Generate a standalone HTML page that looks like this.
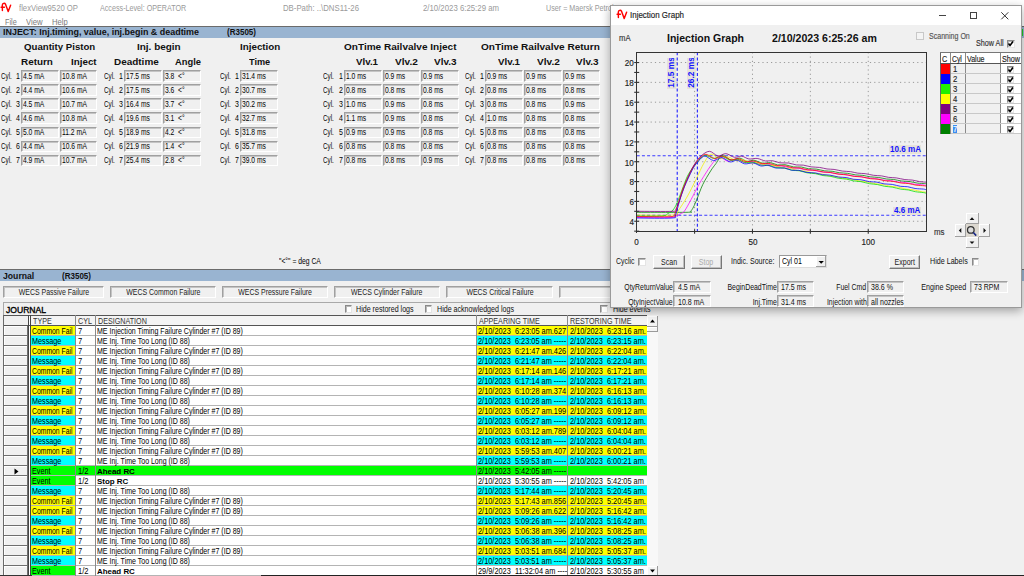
<!DOCTYPE html>
<html><head><meta charset="utf-8"><style>
html,body{margin:0;padding:0;}
body{width:1024px;height:576px;overflow:hidden;position:relative;background:#f0f0f0;font-family:"Liberation Sans", sans-serif;}
.n{-webkit-text-stroke:0.15px currentColor;}
</style></head><body>
<div style="position:absolute;left:0.00px;top:0.00px;width:1024.00px;height:26.00px;background:#fff;"></div>
<svg style="position:absolute;left:-3.6px;top:-1.2px" width="20" height="16"><path d="M6.4 11.6 L6.3 6.2 C6.4 4.3 8.6 3.6 9.6 5.4 L12.2 12.6 L14.6 6.3 M5.1 8.3 H8.4" stroke="#f00" stroke-width="1.45" fill="none" stroke-linecap="round" stroke-linejoin="round"/></svg>
<div style="position:absolute;left:19.00px;top:3.55px;font-size:8.8px;line-height:8.8px;color:#9a9a9a;white-space:pre;transform:scaleX(0.8764);transform-origin:0 0;">flexView9520 OP</div>
<div style="position:absolute;left:99.50px;top:3.55px;font-size:8.8px;line-height:8.8px;color:#9a9a9a;white-space:pre;transform:scaleX(0.8156);transform-origin:0 0;">Access-Level: OPERATOR</div>
<div style="position:absolute;left:282.50px;top:3.55px;font-size:8.8px;line-height:8.8px;color:#9a9a9a;white-space:pre;transform:scaleX(0.8849);transform-origin:0 0;">DB-Path: ..\DNS11-26</div>
<div style="position:absolute;left:422.80px;top:3.55px;font-size:8.8px;line-height:8.8px;color:#9a9a9a;white-space:pre;transform:scaleX(0.8879);transform-origin:0 0;">2/10/2023 6:25:29 am</div>
<div style="position:absolute;left:546.00px;top:3.55px;font-size:8.8px;line-height:8.8px;color:#9a9a9a;white-space:pre;transform:scaleX(0.8150);transform-origin:0 0;">User = Maersk Petroleum</div>
<div style="position:absolute;left:4.90px;top:17.95px;font-size:8.8px;line-height:8.8px;color:#7a7a7a;white-space:pre;transform:scaleX(0.8254);transform-origin:0 0;">File</div>
<div style="position:absolute;left:26.00px;top:17.95px;font-size:8.8px;line-height:8.8px;color:#7a7a7a;white-space:pre;transform:scaleX(0.8779);transform-origin:0 0;">View</div>
<div style="position:absolute;left:52.30px;top:17.95px;font-size:8.8px;line-height:8.8px;color:#7a7a7a;white-space:pre;transform:scaleX(0.8678);transform-origin:0 0;">Help</div>
<div style="position:absolute;left:0.00px;top:26.00px;width:1024.00px;height:1.00px;background:#6b6b6b;"></div>
<div style="position:absolute;left:0.00px;top:27.00px;width:1024.00px;height:11.00px;background:#99b4d1;"></div>
<div style="position:absolute;left:3.00px;top:28.38px;font-size:9px;line-height:9px;font-weight:bold;color:#111;white-space:pre;transform:scaleX(0.9923);transform-origin:0 0;">INJECT: Inj.timing, value, inj.begin &amp; deadtime</div>
<div style="position:absolute;left:227.00px;top:28.38px;font-size:9px;line-height:9px;font-weight:bold;color:#111;white-space:pre;transform:scaleX(0.8919);transform-origin:0 0;">(R3505)</div>
<div style="position:absolute;left:23.75px;top:41.79px;font-size:9.7px;line-height:9.7px;font-weight:bold;color:#111;white-space:pre;transform:scaleX(0.9954);transform-origin:0 0;">Quantity Piston</div>
<div style="position:absolute;left:136.60px;top:41.79px;font-size:9.7px;line-height:9.7px;font-weight:bold;color:#111;white-space:pre;transform:scaleX(1.0279);transform-origin:0 0;">Inj. begin</div>
<div style="position:absolute;left:240.00px;top:41.79px;font-size:9.7px;line-height:9.7px;font-weight:bold;color:#111;white-space:pre;transform:scaleX(1.0118);transform-origin:0 0;">Injection</div>
<div style="position:absolute;left:343.75px;top:41.79px;font-size:9.7px;line-height:9.7px;font-weight:bold;color:#111;white-space:pre;transform:scaleX(1.0361);transform-origin:0 0;">OnTime Railvalve Inject</div>
<div style="position:absolute;left:480.60px;top:41.79px;font-size:9.7px;line-height:9.7px;font-weight:bold;color:#111;white-space:pre;transform:scaleX(1.0376);transform-origin:0 0;">OnTime Railvalve Return</div>
<div style="position:absolute;left:21.25px;top:56.99px;font-size:9.7px;line-height:9.7px;font-weight:bold;color:#111;white-space:pre;transform:scaleX(1.0220);transform-origin:0 0;">Return</div>
<div style="position:absolute;left:70.60px;top:56.99px;font-size:9.7px;line-height:9.7px;font-weight:bold;color:#111;white-space:pre;transform:scaleX(1.0118);transform-origin:0 0;">Inject</div>
<div style="position:absolute;left:114.00px;top:56.99px;font-size:9.7px;line-height:9.7px;font-weight:bold;color:#111;white-space:pre;transform:scaleX(1.0262);transform-origin:0 0;">Deadtime</div>
<div style="position:absolute;left:175.00px;top:56.99px;font-size:9.7px;line-height:9.7px;font-weight:bold;color:#111;white-space:pre;transform:scaleX(0.9662);transform-origin:0 0;">Angle</div>
<div style="position:absolute;left:249.40px;top:56.99px;font-size:9.7px;line-height:9.7px;font-weight:bold;color:#111;white-space:pre;transform:scaleX(0.9449);transform-origin:0 0;">Time</div>
<div style="position:absolute;left:356.00px;top:56.99px;font-size:9.7px;line-height:9.7px;font-weight:bold;color:#111;white-space:pre;transform:scaleX(1.0046);transform-origin:0 0;">Vlv.1</div>
<div style="position:absolute;left:498.40px;top:56.99px;font-size:9.7px;line-height:9.7px;font-weight:bold;color:#111;white-space:pre;transform:scaleX(1.0046);transform-origin:0 0;">Vlv.1</div>
<div style="position:absolute;left:394.70px;top:56.99px;font-size:9.7px;line-height:9.7px;font-weight:bold;color:#111;white-space:pre;transform:scaleX(1.0411);transform-origin:0 0;">Vlv.2</div>
<div style="position:absolute;left:536.90px;top:56.99px;font-size:9.7px;line-height:9.7px;font-weight:bold;color:#111;white-space:pre;transform:scaleX(1.0411);transform-origin:0 0;">Vlv.2</div>
<div style="position:absolute;left:433.75px;top:56.99px;font-size:9.7px;line-height:9.7px;font-weight:bold;color:#111;white-space:pre;transform:scaleX(1.0274);transform-origin:0 0;">Vlv.3</div>
<div style="position:absolute;left:575.60px;top:56.99px;font-size:9.7px;line-height:9.7px;font-weight:bold;color:#111;white-space:pre;transform:scaleX(1.0274);transform-origin:0 0;">Vlv.3</div>
<div style="position:absolute;left:0.90px;top:71.75px;font-size:8.8px;line-height:8.8px;color:#000;white-space:pre;transform:scaleX(0.7100);transform-origin:0 0;">Cyl.</div>
<div style="position:absolute;left:15.06px;top:71.75px;font-size:8.8px;line-height:8.8px;color:#000;white-space:pre;transform:scaleX(0.8000);transform-origin:100% 0;">1</div>
<div style="position:absolute;left:21.25px;top:70.10px;width:37.35px;height:11.60px;background:#f0f0f0;box-sizing:border-box;border-top:1px solid #a0a0a0;border-left:1px solid #a0a0a0;border-right:1px solid #fff;border-bottom:1px solid #fff;box-shadow:inset 1px 1px 0 #c4c4c4;"></div>
<div style="position:absolute;left:23.25px;top:71.75px;font-size:8.8px;line-height:8.8px;color:#000;white-space:pre;transform:scaleX(0.7650);transform-origin:0 0;">4.5 mA</div>
<div style="position:absolute;left:60.00px;top:70.10px;width:37.30px;height:11.60px;background:#f0f0f0;box-sizing:border-box;border-top:1px solid #a0a0a0;border-left:1px solid #a0a0a0;border-right:1px solid #fff;border-bottom:1px solid #fff;box-shadow:inset 1px 1px 0 #c4c4c4;"></div>
<div style="position:absolute;left:62.00px;top:71.75px;font-size:8.8px;line-height:8.8px;color:#000;white-space:pre;transform:scaleX(0.7650);transform-origin:0 0;">10.8 mA</div>
<div style="position:absolute;left:104.00px;top:71.75px;font-size:8.8px;line-height:8.8px;color:#000;white-space:pre;transform:scaleX(0.7100);transform-origin:0 0;">Cyl.</div>
<div style="position:absolute;left:118.21px;top:71.75px;font-size:8.8px;line-height:8.8px;color:#000;white-space:pre;transform:scaleX(0.8000);transform-origin:100% 0;">1</div>
<div style="position:absolute;left:124.40px;top:70.10px;width:37.60px;height:11.60px;background:#f0f0f0;box-sizing:border-box;border-top:1px solid #a0a0a0;border-left:1px solid #a0a0a0;border-right:1px solid #fff;border-bottom:1px solid #fff;box-shadow:inset 1px 1px 0 #c4c4c4;"></div>
<div style="position:absolute;left:126.40px;top:71.75px;font-size:8.8px;line-height:8.8px;color:#000;white-space:pre;transform:scaleX(0.7650);transform-origin:0 0;">17.5 ms</div>
<div style="position:absolute;left:163.00px;top:70.10px;width:38.00px;height:11.60px;background:#f0f0f0;box-sizing:border-box;border-top:1px solid #a0a0a0;border-left:1px solid #a0a0a0;border-right:1px solid #fff;border-bottom:1px solid #fff;box-shadow:inset 1px 1px 0 #c4c4c4;"></div>
<div style="position:absolute;left:165.00px;top:71.75px;font-size:8.8px;line-height:8.8px;color:#000;white-space:pre;transform:scaleX(0.7650);transform-origin:0 0;">3.8  &lt;°</div>
<div style="position:absolute;left:220.30px;top:71.75px;font-size:8.8px;line-height:8.8px;color:#000;white-space:pre;transform:scaleX(0.7100);transform-origin:0 0;">Cyl.</div>
<div style="position:absolute;left:233.81px;top:71.75px;font-size:8.8px;line-height:8.8px;color:#000;white-space:pre;transform:scaleX(0.8000);transform-origin:100% 0;">1</div>
<div style="position:absolute;left:240.00px;top:70.10px;width:37.50px;height:11.60px;background:#f0f0f0;box-sizing:border-box;border-top:1px solid #a0a0a0;border-left:1px solid #a0a0a0;border-right:1px solid #fff;border-bottom:1px solid #fff;box-shadow:inset 1px 1px 0 #c4c4c4;"></div>
<div style="position:absolute;left:242.00px;top:71.75px;font-size:8.8px;line-height:8.8px;color:#000;white-space:pre;transform:scaleX(0.7650);transform-origin:0 0;">31.4 ms</div>
<div style="position:absolute;left:323.40px;top:71.75px;font-size:8.8px;line-height:8.8px;color:#000;white-space:pre;transform:scaleX(0.7100);transform-origin:0 0;">Cyl.</div>
<div style="position:absolute;left:337.56px;top:71.75px;font-size:8.8px;line-height:8.8px;color:#000;white-space:pre;transform:scaleX(0.8000);transform-origin:100% 0;">1</div>
<div style="position:absolute;left:343.75px;top:70.10px;width:37.75px;height:11.60px;background:#f0f0f0;box-sizing:border-box;border-top:1px solid #a0a0a0;border-left:1px solid #a0a0a0;border-right:1px solid #fff;border-bottom:1px solid #fff;box-shadow:inset 1px 1px 0 #c4c4c4;"></div>
<div style="position:absolute;left:345.75px;top:71.75px;font-size:8.8px;line-height:8.8px;color:#000;white-space:pre;transform:scaleX(0.7650);transform-origin:0 0;">1.0 ms</div>
<div style="position:absolute;left:382.80px;top:70.10px;width:37.70px;height:11.60px;background:#f0f0f0;box-sizing:border-box;border-top:1px solid #a0a0a0;border-left:1px solid #a0a0a0;border-right:1px solid #fff;border-bottom:1px solid #fff;box-shadow:inset 1px 1px 0 #c4c4c4;"></div>
<div style="position:absolute;left:384.80px;top:71.75px;font-size:8.8px;line-height:8.8px;color:#000;white-space:pre;transform:scaleX(0.7650);transform-origin:0 0;">0.9 ms</div>
<div style="position:absolute;left:421.25px;top:70.10px;width:37.75px;height:11.60px;background:#f0f0f0;box-sizing:border-box;border-top:1px solid #a0a0a0;border-left:1px solid #a0a0a0;border-right:1px solid #fff;border-bottom:1px solid #fff;box-shadow:inset 1px 1px 0 #c4c4c4;"></div>
<div style="position:absolute;left:423.25px;top:71.75px;font-size:8.8px;line-height:8.8px;color:#000;white-space:pre;transform:scaleX(0.7650);transform-origin:0 0;">0.9 ms</div>
<div style="position:absolute;left:465.00px;top:71.75px;font-size:8.8px;line-height:8.8px;color:#000;white-space:pre;transform:scaleX(0.7100);transform-origin:0 0;">Cyl.</div>
<div style="position:absolute;left:479.11px;top:71.75px;font-size:8.8px;line-height:8.8px;color:#000;white-space:pre;transform:scaleX(0.8000);transform-origin:100% 0;">1</div>
<div style="position:absolute;left:485.30px;top:70.10px;width:37.70px;height:11.60px;background:#f0f0f0;box-sizing:border-box;border-top:1px solid #a0a0a0;border-left:1px solid #a0a0a0;border-right:1px solid #fff;border-bottom:1px solid #fff;box-shadow:inset 1px 1px 0 #c4c4c4;"></div>
<div style="position:absolute;left:487.30px;top:71.75px;font-size:8.8px;line-height:8.8px;color:#000;white-space:pre;transform:scaleX(0.7650);transform-origin:0 0;">0.9 ms</div>
<div style="position:absolute;left:524.00px;top:70.10px;width:37.80px;height:11.60px;background:#f0f0f0;box-sizing:border-box;border-top:1px solid #a0a0a0;border-left:1px solid #a0a0a0;border-right:1px solid #fff;border-bottom:1px solid #fff;box-shadow:inset 1px 1px 0 #c4c4c4;"></div>
<div style="position:absolute;left:526.00px;top:71.75px;font-size:8.8px;line-height:8.8px;color:#000;white-space:pre;transform:scaleX(0.7650);transform-origin:0 0;">0.9 ms</div>
<div style="position:absolute;left:562.50px;top:70.10px;width:37.80px;height:11.60px;background:#f0f0f0;box-sizing:border-box;border-top:1px solid #a0a0a0;border-left:1px solid #a0a0a0;border-right:1px solid #fff;border-bottom:1px solid #fff;box-shadow:inset 1px 1px 0 #c4c4c4;"></div>
<div style="position:absolute;left:564.50px;top:71.75px;font-size:8.8px;line-height:8.8px;color:#000;white-space:pre;transform:scaleX(0.7650);transform-origin:0 0;">0.9 ms</div>
<div style="position:absolute;left:0.90px;top:85.85px;font-size:8.8px;line-height:8.8px;color:#000;white-space:pre;transform:scaleX(0.7100);transform-origin:0 0;">Cyl.</div>
<div style="position:absolute;left:15.06px;top:85.85px;font-size:8.8px;line-height:8.8px;color:#000;white-space:pre;transform:scaleX(0.8000);transform-origin:100% 0;">2</div>
<div style="position:absolute;left:21.25px;top:84.20px;width:37.35px;height:11.60px;background:#f0f0f0;box-sizing:border-box;border-top:1px solid #a0a0a0;border-left:1px solid #a0a0a0;border-right:1px solid #fff;border-bottom:1px solid #fff;box-shadow:inset 1px 1px 0 #c4c4c4;"></div>
<div style="position:absolute;left:23.25px;top:85.85px;font-size:8.8px;line-height:8.8px;color:#000;white-space:pre;transform:scaleX(0.7650);transform-origin:0 0;">4.4 mA</div>
<div style="position:absolute;left:60.00px;top:84.20px;width:37.30px;height:11.60px;background:#f0f0f0;box-sizing:border-box;border-top:1px solid #a0a0a0;border-left:1px solid #a0a0a0;border-right:1px solid #fff;border-bottom:1px solid #fff;box-shadow:inset 1px 1px 0 #c4c4c4;"></div>
<div style="position:absolute;left:62.00px;top:85.85px;font-size:8.8px;line-height:8.8px;color:#000;white-space:pre;transform:scaleX(0.7650);transform-origin:0 0;">10.6 mA</div>
<div style="position:absolute;left:104.00px;top:85.85px;font-size:8.8px;line-height:8.8px;color:#000;white-space:pre;transform:scaleX(0.7100);transform-origin:0 0;">Cyl.</div>
<div style="position:absolute;left:118.21px;top:85.85px;font-size:8.8px;line-height:8.8px;color:#000;white-space:pre;transform:scaleX(0.8000);transform-origin:100% 0;">2</div>
<div style="position:absolute;left:124.40px;top:84.20px;width:37.60px;height:11.60px;background:#f0f0f0;box-sizing:border-box;border-top:1px solid #a0a0a0;border-left:1px solid #a0a0a0;border-right:1px solid #fff;border-bottom:1px solid #fff;box-shadow:inset 1px 1px 0 #c4c4c4;"></div>
<div style="position:absolute;left:126.40px;top:85.85px;font-size:8.8px;line-height:8.8px;color:#000;white-space:pre;transform:scaleX(0.7650);transform-origin:0 0;">17.5 ms</div>
<div style="position:absolute;left:163.00px;top:84.20px;width:38.00px;height:11.60px;background:#f0f0f0;box-sizing:border-box;border-top:1px solid #a0a0a0;border-left:1px solid #a0a0a0;border-right:1px solid #fff;border-bottom:1px solid #fff;box-shadow:inset 1px 1px 0 #c4c4c4;"></div>
<div style="position:absolute;left:165.00px;top:85.85px;font-size:8.8px;line-height:8.8px;color:#000;white-space:pre;transform:scaleX(0.7650);transform-origin:0 0;">3.6  &lt;°</div>
<div style="position:absolute;left:220.30px;top:85.85px;font-size:8.8px;line-height:8.8px;color:#000;white-space:pre;transform:scaleX(0.7100);transform-origin:0 0;">Cyl.</div>
<div style="position:absolute;left:233.81px;top:85.85px;font-size:8.8px;line-height:8.8px;color:#000;white-space:pre;transform:scaleX(0.8000);transform-origin:100% 0;">2</div>
<div style="position:absolute;left:240.00px;top:84.20px;width:37.50px;height:11.60px;background:#f0f0f0;box-sizing:border-box;border-top:1px solid #a0a0a0;border-left:1px solid #a0a0a0;border-right:1px solid #fff;border-bottom:1px solid #fff;box-shadow:inset 1px 1px 0 #c4c4c4;"></div>
<div style="position:absolute;left:242.00px;top:85.85px;font-size:8.8px;line-height:8.8px;color:#000;white-space:pre;transform:scaleX(0.7650);transform-origin:0 0;">30.7 ms</div>
<div style="position:absolute;left:323.40px;top:85.85px;font-size:8.8px;line-height:8.8px;color:#000;white-space:pre;transform:scaleX(0.7100);transform-origin:0 0;">Cyl.</div>
<div style="position:absolute;left:337.56px;top:85.85px;font-size:8.8px;line-height:8.8px;color:#000;white-space:pre;transform:scaleX(0.8000);transform-origin:100% 0;">2</div>
<div style="position:absolute;left:343.75px;top:84.20px;width:37.75px;height:11.60px;background:#f0f0f0;box-sizing:border-box;border-top:1px solid #a0a0a0;border-left:1px solid #a0a0a0;border-right:1px solid #fff;border-bottom:1px solid #fff;box-shadow:inset 1px 1px 0 #c4c4c4;"></div>
<div style="position:absolute;left:345.75px;top:85.85px;font-size:8.8px;line-height:8.8px;color:#000;white-space:pre;transform:scaleX(0.7650);transform-origin:0 0;">0.8 ms</div>
<div style="position:absolute;left:382.80px;top:84.20px;width:37.70px;height:11.60px;background:#f0f0f0;box-sizing:border-box;border-top:1px solid #a0a0a0;border-left:1px solid #a0a0a0;border-right:1px solid #fff;border-bottom:1px solid #fff;box-shadow:inset 1px 1px 0 #c4c4c4;"></div>
<div style="position:absolute;left:384.80px;top:85.85px;font-size:8.8px;line-height:8.8px;color:#000;white-space:pre;transform:scaleX(0.7650);transform-origin:0 0;">0.8 ms</div>
<div style="position:absolute;left:421.25px;top:84.20px;width:37.75px;height:11.60px;background:#f0f0f0;box-sizing:border-box;border-top:1px solid #a0a0a0;border-left:1px solid #a0a0a0;border-right:1px solid #fff;border-bottom:1px solid #fff;box-shadow:inset 1px 1px 0 #c4c4c4;"></div>
<div style="position:absolute;left:423.25px;top:85.85px;font-size:8.8px;line-height:8.8px;color:#000;white-space:pre;transform:scaleX(0.7650);transform-origin:0 0;">0.8 ms</div>
<div style="position:absolute;left:465.00px;top:85.85px;font-size:8.8px;line-height:8.8px;color:#000;white-space:pre;transform:scaleX(0.7100);transform-origin:0 0;">Cyl.</div>
<div style="position:absolute;left:479.11px;top:85.85px;font-size:8.8px;line-height:8.8px;color:#000;white-space:pre;transform:scaleX(0.8000);transform-origin:100% 0;">2</div>
<div style="position:absolute;left:485.30px;top:84.20px;width:37.70px;height:11.60px;background:#f0f0f0;box-sizing:border-box;border-top:1px solid #a0a0a0;border-left:1px solid #a0a0a0;border-right:1px solid #fff;border-bottom:1px solid #fff;box-shadow:inset 1px 1px 0 #c4c4c4;"></div>
<div style="position:absolute;left:487.30px;top:85.85px;font-size:8.8px;line-height:8.8px;color:#000;white-space:pre;transform:scaleX(0.7650);transform-origin:0 0;">0.8 ms</div>
<div style="position:absolute;left:524.00px;top:84.20px;width:37.80px;height:11.60px;background:#f0f0f0;box-sizing:border-box;border-top:1px solid #a0a0a0;border-left:1px solid #a0a0a0;border-right:1px solid #fff;border-bottom:1px solid #fff;box-shadow:inset 1px 1px 0 #c4c4c4;"></div>
<div style="position:absolute;left:526.00px;top:85.85px;font-size:8.8px;line-height:8.8px;color:#000;white-space:pre;transform:scaleX(0.7650);transform-origin:0 0;">0.8 ms</div>
<div style="position:absolute;left:562.50px;top:84.20px;width:37.80px;height:11.60px;background:#f0f0f0;box-sizing:border-box;border-top:1px solid #a0a0a0;border-left:1px solid #a0a0a0;border-right:1px solid #fff;border-bottom:1px solid #fff;box-shadow:inset 1px 1px 0 #c4c4c4;"></div>
<div style="position:absolute;left:564.50px;top:85.85px;font-size:8.8px;line-height:8.8px;color:#000;white-space:pre;transform:scaleX(0.7650);transform-origin:0 0;">0.8 ms</div>
<div style="position:absolute;left:0.90px;top:99.95px;font-size:8.8px;line-height:8.8px;color:#000;white-space:pre;transform:scaleX(0.7100);transform-origin:0 0;">Cyl.</div>
<div style="position:absolute;left:15.06px;top:99.95px;font-size:8.8px;line-height:8.8px;color:#000;white-space:pre;transform:scaleX(0.8000);transform-origin:100% 0;">3</div>
<div style="position:absolute;left:21.25px;top:98.30px;width:37.35px;height:11.60px;background:#f0f0f0;box-sizing:border-box;border-top:1px solid #a0a0a0;border-left:1px solid #a0a0a0;border-right:1px solid #fff;border-bottom:1px solid #fff;box-shadow:inset 1px 1px 0 #c4c4c4;"></div>
<div style="position:absolute;left:23.25px;top:99.95px;font-size:8.8px;line-height:8.8px;color:#000;white-space:pre;transform:scaleX(0.7650);transform-origin:0 0;">4.5 mA</div>
<div style="position:absolute;left:60.00px;top:98.30px;width:37.30px;height:11.60px;background:#f0f0f0;box-sizing:border-box;border-top:1px solid #a0a0a0;border-left:1px solid #a0a0a0;border-right:1px solid #fff;border-bottom:1px solid #fff;box-shadow:inset 1px 1px 0 #c4c4c4;"></div>
<div style="position:absolute;left:62.00px;top:99.95px;font-size:8.8px;line-height:8.8px;color:#000;white-space:pre;transform:scaleX(0.7650);transform-origin:0 0;">10.7 mA</div>
<div style="position:absolute;left:104.00px;top:99.95px;font-size:8.8px;line-height:8.8px;color:#000;white-space:pre;transform:scaleX(0.7100);transform-origin:0 0;">Cyl.</div>
<div style="position:absolute;left:118.21px;top:99.95px;font-size:8.8px;line-height:8.8px;color:#000;white-space:pre;transform:scaleX(0.8000);transform-origin:100% 0;">3</div>
<div style="position:absolute;left:124.40px;top:98.30px;width:37.60px;height:11.60px;background:#f0f0f0;box-sizing:border-box;border-top:1px solid #a0a0a0;border-left:1px solid #a0a0a0;border-right:1px solid #fff;border-bottom:1px solid #fff;box-shadow:inset 1px 1px 0 #c4c4c4;"></div>
<div style="position:absolute;left:126.40px;top:99.95px;font-size:8.8px;line-height:8.8px;color:#000;white-space:pre;transform:scaleX(0.7650);transform-origin:0 0;">16.4 ms</div>
<div style="position:absolute;left:163.00px;top:98.30px;width:38.00px;height:11.60px;background:#f0f0f0;box-sizing:border-box;border-top:1px solid #a0a0a0;border-left:1px solid #a0a0a0;border-right:1px solid #fff;border-bottom:1px solid #fff;box-shadow:inset 1px 1px 0 #c4c4c4;"></div>
<div style="position:absolute;left:165.00px;top:99.95px;font-size:8.8px;line-height:8.8px;color:#000;white-space:pre;transform:scaleX(0.7650);transform-origin:0 0;">3.7  &lt;°</div>
<div style="position:absolute;left:220.30px;top:99.95px;font-size:8.8px;line-height:8.8px;color:#000;white-space:pre;transform:scaleX(0.7100);transform-origin:0 0;">Cyl.</div>
<div style="position:absolute;left:233.81px;top:99.95px;font-size:8.8px;line-height:8.8px;color:#000;white-space:pre;transform:scaleX(0.8000);transform-origin:100% 0;">3</div>
<div style="position:absolute;left:240.00px;top:98.30px;width:37.50px;height:11.60px;background:#f0f0f0;box-sizing:border-box;border-top:1px solid #a0a0a0;border-left:1px solid #a0a0a0;border-right:1px solid #fff;border-bottom:1px solid #fff;box-shadow:inset 1px 1px 0 #c4c4c4;"></div>
<div style="position:absolute;left:242.00px;top:99.95px;font-size:8.8px;line-height:8.8px;color:#000;white-space:pre;transform:scaleX(0.7650);transform-origin:0 0;">30.2 ms</div>
<div style="position:absolute;left:323.40px;top:99.95px;font-size:8.8px;line-height:8.8px;color:#000;white-space:pre;transform:scaleX(0.7100);transform-origin:0 0;">Cyl.</div>
<div style="position:absolute;left:337.56px;top:99.95px;font-size:8.8px;line-height:8.8px;color:#000;white-space:pre;transform:scaleX(0.8000);transform-origin:100% 0;">3</div>
<div style="position:absolute;left:343.75px;top:98.30px;width:37.75px;height:11.60px;background:#f0f0f0;box-sizing:border-box;border-top:1px solid #a0a0a0;border-left:1px solid #a0a0a0;border-right:1px solid #fff;border-bottom:1px solid #fff;box-shadow:inset 1px 1px 0 #c4c4c4;"></div>
<div style="position:absolute;left:345.75px;top:99.95px;font-size:8.8px;line-height:8.8px;color:#000;white-space:pre;transform:scaleX(0.7650);transform-origin:0 0;">1.0 ms</div>
<div style="position:absolute;left:382.80px;top:98.30px;width:37.70px;height:11.60px;background:#f0f0f0;box-sizing:border-box;border-top:1px solid #a0a0a0;border-left:1px solid #a0a0a0;border-right:1px solid #fff;border-bottom:1px solid #fff;box-shadow:inset 1px 1px 0 #c4c4c4;"></div>
<div style="position:absolute;left:384.80px;top:99.95px;font-size:8.8px;line-height:8.8px;color:#000;white-space:pre;transform:scaleX(0.7650);transform-origin:0 0;">0.9 ms</div>
<div style="position:absolute;left:421.25px;top:98.30px;width:37.75px;height:11.60px;background:#f0f0f0;box-sizing:border-box;border-top:1px solid #a0a0a0;border-left:1px solid #a0a0a0;border-right:1px solid #fff;border-bottom:1px solid #fff;box-shadow:inset 1px 1px 0 #c4c4c4;"></div>
<div style="position:absolute;left:423.25px;top:99.95px;font-size:8.8px;line-height:8.8px;color:#000;white-space:pre;transform:scaleX(0.7650);transform-origin:0 0;">0.8 ms</div>
<div style="position:absolute;left:465.00px;top:99.95px;font-size:8.8px;line-height:8.8px;color:#000;white-space:pre;transform:scaleX(0.7100);transform-origin:0 0;">Cyl.</div>
<div style="position:absolute;left:479.11px;top:99.95px;font-size:8.8px;line-height:8.8px;color:#000;white-space:pre;transform:scaleX(0.8000);transform-origin:100% 0;">3</div>
<div style="position:absolute;left:485.30px;top:98.30px;width:37.70px;height:11.60px;background:#f0f0f0;box-sizing:border-box;border-top:1px solid #a0a0a0;border-left:1px solid #a0a0a0;border-right:1px solid #fff;border-bottom:1px solid #fff;box-shadow:inset 1px 1px 0 #c4c4c4;"></div>
<div style="position:absolute;left:487.30px;top:99.95px;font-size:8.8px;line-height:8.8px;color:#000;white-space:pre;transform:scaleX(0.7650);transform-origin:0 0;">0.8 ms</div>
<div style="position:absolute;left:524.00px;top:98.30px;width:37.80px;height:11.60px;background:#f0f0f0;box-sizing:border-box;border-top:1px solid #a0a0a0;border-left:1px solid #a0a0a0;border-right:1px solid #fff;border-bottom:1px solid #fff;box-shadow:inset 1px 1px 0 #c4c4c4;"></div>
<div style="position:absolute;left:526.00px;top:99.95px;font-size:8.8px;line-height:8.8px;color:#000;white-space:pre;transform:scaleX(0.7650);transform-origin:0 0;">0.8 ms</div>
<div style="position:absolute;left:562.50px;top:98.30px;width:37.80px;height:11.60px;background:#f0f0f0;box-sizing:border-box;border-top:1px solid #a0a0a0;border-left:1px solid #a0a0a0;border-right:1px solid #fff;border-bottom:1px solid #fff;box-shadow:inset 1px 1px 0 #c4c4c4;"></div>
<div style="position:absolute;left:564.50px;top:99.95px;font-size:8.8px;line-height:8.8px;color:#000;white-space:pre;transform:scaleX(0.7650);transform-origin:0 0;">0.9 ms</div>
<div style="position:absolute;left:0.90px;top:114.05px;font-size:8.8px;line-height:8.8px;color:#000;white-space:pre;transform:scaleX(0.7100);transform-origin:0 0;">Cyl.</div>
<div style="position:absolute;left:15.06px;top:114.05px;font-size:8.8px;line-height:8.8px;color:#000;white-space:pre;transform:scaleX(0.8000);transform-origin:100% 0;">4</div>
<div style="position:absolute;left:21.25px;top:112.40px;width:37.35px;height:11.60px;background:#f0f0f0;box-sizing:border-box;border-top:1px solid #a0a0a0;border-left:1px solid #a0a0a0;border-right:1px solid #fff;border-bottom:1px solid #fff;box-shadow:inset 1px 1px 0 #c4c4c4;"></div>
<div style="position:absolute;left:23.25px;top:114.05px;font-size:8.8px;line-height:8.8px;color:#000;white-space:pre;transform:scaleX(0.7650);transform-origin:0 0;">4.6 mA</div>
<div style="position:absolute;left:60.00px;top:112.40px;width:37.30px;height:11.60px;background:#f0f0f0;box-sizing:border-box;border-top:1px solid #a0a0a0;border-left:1px solid #a0a0a0;border-right:1px solid #fff;border-bottom:1px solid #fff;box-shadow:inset 1px 1px 0 #c4c4c4;"></div>
<div style="position:absolute;left:62.00px;top:114.05px;font-size:8.8px;line-height:8.8px;color:#000;white-space:pre;transform:scaleX(0.7650);transform-origin:0 0;">10.8 mA</div>
<div style="position:absolute;left:104.00px;top:114.05px;font-size:8.8px;line-height:8.8px;color:#000;white-space:pre;transform:scaleX(0.7100);transform-origin:0 0;">Cyl.</div>
<div style="position:absolute;left:118.21px;top:114.05px;font-size:8.8px;line-height:8.8px;color:#000;white-space:pre;transform:scaleX(0.8000);transform-origin:100% 0;">4</div>
<div style="position:absolute;left:124.40px;top:112.40px;width:37.60px;height:11.60px;background:#f0f0f0;box-sizing:border-box;border-top:1px solid #a0a0a0;border-left:1px solid #a0a0a0;border-right:1px solid #fff;border-bottom:1px solid #fff;box-shadow:inset 1px 1px 0 #c4c4c4;"></div>
<div style="position:absolute;left:126.40px;top:114.05px;font-size:8.8px;line-height:8.8px;color:#000;white-space:pre;transform:scaleX(0.7650);transform-origin:0 0;">19.6 ms</div>
<div style="position:absolute;left:163.00px;top:112.40px;width:38.00px;height:11.60px;background:#f0f0f0;box-sizing:border-box;border-top:1px solid #a0a0a0;border-left:1px solid #a0a0a0;border-right:1px solid #fff;border-bottom:1px solid #fff;box-shadow:inset 1px 1px 0 #c4c4c4;"></div>
<div style="position:absolute;left:165.00px;top:114.05px;font-size:8.8px;line-height:8.8px;color:#000;white-space:pre;transform:scaleX(0.7650);transform-origin:0 0;">3.1  &lt;°</div>
<div style="position:absolute;left:220.30px;top:114.05px;font-size:8.8px;line-height:8.8px;color:#000;white-space:pre;transform:scaleX(0.7100);transform-origin:0 0;">Cyl.</div>
<div style="position:absolute;left:233.81px;top:114.05px;font-size:8.8px;line-height:8.8px;color:#000;white-space:pre;transform:scaleX(0.8000);transform-origin:100% 0;">4</div>
<div style="position:absolute;left:240.00px;top:112.40px;width:37.50px;height:11.60px;background:#f0f0f0;box-sizing:border-box;border-top:1px solid #a0a0a0;border-left:1px solid #a0a0a0;border-right:1px solid #fff;border-bottom:1px solid #fff;box-shadow:inset 1px 1px 0 #c4c4c4;"></div>
<div style="position:absolute;left:242.00px;top:114.05px;font-size:8.8px;line-height:8.8px;color:#000;white-space:pre;transform:scaleX(0.7650);transform-origin:0 0;">32.7 ms</div>
<div style="position:absolute;left:323.40px;top:114.05px;font-size:8.8px;line-height:8.8px;color:#000;white-space:pre;transform:scaleX(0.7100);transform-origin:0 0;">Cyl.</div>
<div style="position:absolute;left:337.56px;top:114.05px;font-size:8.8px;line-height:8.8px;color:#000;white-space:pre;transform:scaleX(0.8000);transform-origin:100% 0;">4</div>
<div style="position:absolute;left:343.75px;top:112.40px;width:37.75px;height:11.60px;background:#f0f0f0;box-sizing:border-box;border-top:1px solid #a0a0a0;border-left:1px solid #a0a0a0;border-right:1px solid #fff;border-bottom:1px solid #fff;box-shadow:inset 1px 1px 0 #c4c4c4;"></div>
<div style="position:absolute;left:345.75px;top:114.05px;font-size:8.8px;line-height:8.8px;color:#000;white-space:pre;transform:scaleX(0.7650);transform-origin:0 0;">1.1 ms</div>
<div style="position:absolute;left:382.80px;top:112.40px;width:37.70px;height:11.60px;background:#f0f0f0;box-sizing:border-box;border-top:1px solid #a0a0a0;border-left:1px solid #a0a0a0;border-right:1px solid #fff;border-bottom:1px solid #fff;box-shadow:inset 1px 1px 0 #c4c4c4;"></div>
<div style="position:absolute;left:384.80px;top:114.05px;font-size:8.8px;line-height:8.8px;color:#000;white-space:pre;transform:scaleX(0.7650);transform-origin:0 0;">0.9 ms</div>
<div style="position:absolute;left:421.25px;top:112.40px;width:37.75px;height:11.60px;background:#f0f0f0;box-sizing:border-box;border-top:1px solid #a0a0a0;border-left:1px solid #a0a0a0;border-right:1px solid #fff;border-bottom:1px solid #fff;box-shadow:inset 1px 1px 0 #c4c4c4;"></div>
<div style="position:absolute;left:423.25px;top:114.05px;font-size:8.8px;line-height:8.8px;color:#000;white-space:pre;transform:scaleX(0.7650);transform-origin:0 0;">0.8 ms</div>
<div style="position:absolute;left:465.00px;top:114.05px;font-size:8.8px;line-height:8.8px;color:#000;white-space:pre;transform:scaleX(0.7100);transform-origin:0 0;">Cyl.</div>
<div style="position:absolute;left:479.11px;top:114.05px;font-size:8.8px;line-height:8.8px;color:#000;white-space:pre;transform:scaleX(0.8000);transform-origin:100% 0;">4</div>
<div style="position:absolute;left:485.30px;top:112.40px;width:37.70px;height:11.60px;background:#f0f0f0;box-sizing:border-box;border-top:1px solid #a0a0a0;border-left:1px solid #a0a0a0;border-right:1px solid #fff;border-bottom:1px solid #fff;box-shadow:inset 1px 1px 0 #c4c4c4;"></div>
<div style="position:absolute;left:487.30px;top:114.05px;font-size:8.8px;line-height:8.8px;color:#000;white-space:pre;transform:scaleX(0.7650);transform-origin:0 0;">1.0 ms</div>
<div style="position:absolute;left:524.00px;top:112.40px;width:37.80px;height:11.60px;background:#f0f0f0;box-sizing:border-box;border-top:1px solid #a0a0a0;border-left:1px solid #a0a0a0;border-right:1px solid #fff;border-bottom:1px solid #fff;box-shadow:inset 1px 1px 0 #c4c4c4;"></div>
<div style="position:absolute;left:526.00px;top:114.05px;font-size:8.8px;line-height:8.8px;color:#000;white-space:pre;transform:scaleX(0.7650);transform-origin:0 0;">0.8 ms</div>
<div style="position:absolute;left:562.50px;top:112.40px;width:37.80px;height:11.60px;background:#f0f0f0;box-sizing:border-box;border-top:1px solid #a0a0a0;border-left:1px solid #a0a0a0;border-right:1px solid #fff;border-bottom:1px solid #fff;box-shadow:inset 1px 1px 0 #c4c4c4;"></div>
<div style="position:absolute;left:564.50px;top:114.05px;font-size:8.8px;line-height:8.8px;color:#000;white-space:pre;transform:scaleX(0.7650);transform-origin:0 0;">0.8 ms</div>
<div style="position:absolute;left:0.90px;top:128.15px;font-size:8.8px;line-height:8.8px;color:#000;white-space:pre;transform:scaleX(0.7100);transform-origin:0 0;">Cyl.</div>
<div style="position:absolute;left:15.06px;top:128.15px;font-size:8.8px;line-height:8.8px;color:#000;white-space:pre;transform:scaleX(0.8000);transform-origin:100% 0;">5</div>
<div style="position:absolute;left:21.25px;top:126.50px;width:37.35px;height:11.60px;background:#f0f0f0;box-sizing:border-box;border-top:1px solid #a0a0a0;border-left:1px solid #a0a0a0;border-right:1px solid #fff;border-bottom:1px solid #fff;box-shadow:inset 1px 1px 0 #c4c4c4;"></div>
<div style="position:absolute;left:23.25px;top:128.15px;font-size:8.8px;line-height:8.8px;color:#000;white-space:pre;transform:scaleX(0.7650);transform-origin:0 0;">5.0 mA</div>
<div style="position:absolute;left:60.00px;top:126.50px;width:37.30px;height:11.60px;background:#f0f0f0;box-sizing:border-box;border-top:1px solid #a0a0a0;border-left:1px solid #a0a0a0;border-right:1px solid #fff;border-bottom:1px solid #fff;box-shadow:inset 1px 1px 0 #c4c4c4;"></div>
<div style="position:absolute;left:62.00px;top:128.15px;font-size:8.8px;line-height:8.8px;color:#000;white-space:pre;transform:scaleX(0.7650);transform-origin:0 0;">11.2 mA</div>
<div style="position:absolute;left:104.00px;top:128.15px;font-size:8.8px;line-height:8.8px;color:#000;white-space:pre;transform:scaleX(0.7100);transform-origin:0 0;">Cyl.</div>
<div style="position:absolute;left:118.21px;top:128.15px;font-size:8.8px;line-height:8.8px;color:#000;white-space:pre;transform:scaleX(0.8000);transform-origin:100% 0;">5</div>
<div style="position:absolute;left:124.40px;top:126.50px;width:37.60px;height:11.60px;background:#f0f0f0;box-sizing:border-box;border-top:1px solid #a0a0a0;border-left:1px solid #a0a0a0;border-right:1px solid #fff;border-bottom:1px solid #fff;box-shadow:inset 1px 1px 0 #c4c4c4;"></div>
<div style="position:absolute;left:126.40px;top:128.15px;font-size:8.8px;line-height:8.8px;color:#000;white-space:pre;transform:scaleX(0.7650);transform-origin:0 0;">18.9 ms</div>
<div style="position:absolute;left:163.00px;top:126.50px;width:38.00px;height:11.60px;background:#f0f0f0;box-sizing:border-box;border-top:1px solid #a0a0a0;border-left:1px solid #a0a0a0;border-right:1px solid #fff;border-bottom:1px solid #fff;box-shadow:inset 1px 1px 0 #c4c4c4;"></div>
<div style="position:absolute;left:165.00px;top:128.15px;font-size:8.8px;line-height:8.8px;color:#000;white-space:pre;transform:scaleX(0.7650);transform-origin:0 0;">4.2  &lt;°</div>
<div style="position:absolute;left:220.30px;top:128.15px;font-size:8.8px;line-height:8.8px;color:#000;white-space:pre;transform:scaleX(0.7100);transform-origin:0 0;">Cyl.</div>
<div style="position:absolute;left:233.81px;top:128.15px;font-size:8.8px;line-height:8.8px;color:#000;white-space:pre;transform:scaleX(0.8000);transform-origin:100% 0;">5</div>
<div style="position:absolute;left:240.00px;top:126.50px;width:37.50px;height:11.60px;background:#f0f0f0;box-sizing:border-box;border-top:1px solid #a0a0a0;border-left:1px solid #a0a0a0;border-right:1px solid #fff;border-bottom:1px solid #fff;box-shadow:inset 1px 1px 0 #c4c4c4;"></div>
<div style="position:absolute;left:242.00px;top:128.15px;font-size:8.8px;line-height:8.8px;color:#000;white-space:pre;transform:scaleX(0.7650);transform-origin:0 0;">31.8 ms</div>
<div style="position:absolute;left:323.40px;top:128.15px;font-size:8.8px;line-height:8.8px;color:#000;white-space:pre;transform:scaleX(0.7100);transform-origin:0 0;">Cyl.</div>
<div style="position:absolute;left:337.56px;top:128.15px;font-size:8.8px;line-height:8.8px;color:#000;white-space:pre;transform:scaleX(0.8000);transform-origin:100% 0;">5</div>
<div style="position:absolute;left:343.75px;top:126.50px;width:37.75px;height:11.60px;background:#f0f0f0;box-sizing:border-box;border-top:1px solid #a0a0a0;border-left:1px solid #a0a0a0;border-right:1px solid #fff;border-bottom:1px solid #fff;box-shadow:inset 1px 1px 0 #c4c4c4;"></div>
<div style="position:absolute;left:345.75px;top:128.15px;font-size:8.8px;line-height:8.8px;color:#000;white-space:pre;transform:scaleX(0.7650);transform-origin:0 0;">0.9 ms</div>
<div style="position:absolute;left:382.80px;top:126.50px;width:37.70px;height:11.60px;background:#f0f0f0;box-sizing:border-box;border-top:1px solid #a0a0a0;border-left:1px solid #a0a0a0;border-right:1px solid #fff;border-bottom:1px solid #fff;box-shadow:inset 1px 1px 0 #c4c4c4;"></div>
<div style="position:absolute;left:384.80px;top:128.15px;font-size:8.8px;line-height:8.8px;color:#000;white-space:pre;transform:scaleX(0.7650);transform-origin:0 0;">0.9 ms</div>
<div style="position:absolute;left:421.25px;top:126.50px;width:37.75px;height:11.60px;background:#f0f0f0;box-sizing:border-box;border-top:1px solid #a0a0a0;border-left:1px solid #a0a0a0;border-right:1px solid #fff;border-bottom:1px solid #fff;box-shadow:inset 1px 1px 0 #c4c4c4;"></div>
<div style="position:absolute;left:423.25px;top:128.15px;font-size:8.8px;line-height:8.8px;color:#000;white-space:pre;transform:scaleX(0.7650);transform-origin:0 0;">0.8 ms</div>
<div style="position:absolute;left:465.00px;top:128.15px;font-size:8.8px;line-height:8.8px;color:#000;white-space:pre;transform:scaleX(0.7100);transform-origin:0 0;">Cyl.</div>
<div style="position:absolute;left:479.11px;top:128.15px;font-size:8.8px;line-height:8.8px;color:#000;white-space:pre;transform:scaleX(0.8000);transform-origin:100% 0;">5</div>
<div style="position:absolute;left:485.30px;top:126.50px;width:37.70px;height:11.60px;background:#f0f0f0;box-sizing:border-box;border-top:1px solid #a0a0a0;border-left:1px solid #a0a0a0;border-right:1px solid #fff;border-bottom:1px solid #fff;box-shadow:inset 1px 1px 0 #c4c4c4;"></div>
<div style="position:absolute;left:487.30px;top:128.15px;font-size:8.8px;line-height:8.8px;color:#000;white-space:pre;transform:scaleX(0.7650);transform-origin:0 0;">0.8 ms</div>
<div style="position:absolute;left:524.00px;top:126.50px;width:37.80px;height:11.60px;background:#f0f0f0;box-sizing:border-box;border-top:1px solid #a0a0a0;border-left:1px solid #a0a0a0;border-right:1px solid #fff;border-bottom:1px solid #fff;box-shadow:inset 1px 1px 0 #c4c4c4;"></div>
<div style="position:absolute;left:526.00px;top:128.15px;font-size:8.8px;line-height:8.8px;color:#000;white-space:pre;transform:scaleX(0.7650);transform-origin:0 0;">0.8 ms</div>
<div style="position:absolute;left:562.50px;top:126.50px;width:37.80px;height:11.60px;background:#f0f0f0;box-sizing:border-box;border-top:1px solid #a0a0a0;border-left:1px solid #a0a0a0;border-right:1px solid #fff;border-bottom:1px solid #fff;box-shadow:inset 1px 1px 0 #c4c4c4;"></div>
<div style="position:absolute;left:564.50px;top:128.15px;font-size:8.8px;line-height:8.8px;color:#000;white-space:pre;transform:scaleX(0.7650);transform-origin:0 0;">0.8 ms</div>
<div style="position:absolute;left:0.90px;top:142.25px;font-size:8.8px;line-height:8.8px;color:#000;white-space:pre;transform:scaleX(0.7100);transform-origin:0 0;">Cyl.</div>
<div style="position:absolute;left:15.06px;top:142.25px;font-size:8.8px;line-height:8.8px;color:#000;white-space:pre;transform:scaleX(0.8000);transform-origin:100% 0;">6</div>
<div style="position:absolute;left:21.25px;top:140.60px;width:37.35px;height:11.60px;background:#f0f0f0;box-sizing:border-box;border-top:1px solid #a0a0a0;border-left:1px solid #a0a0a0;border-right:1px solid #fff;border-bottom:1px solid #fff;box-shadow:inset 1px 1px 0 #c4c4c4;"></div>
<div style="position:absolute;left:23.25px;top:142.25px;font-size:8.8px;line-height:8.8px;color:#000;white-space:pre;transform:scaleX(0.7650);transform-origin:0 0;">4.4 mA</div>
<div style="position:absolute;left:60.00px;top:140.60px;width:37.30px;height:11.60px;background:#f0f0f0;box-sizing:border-box;border-top:1px solid #a0a0a0;border-left:1px solid #a0a0a0;border-right:1px solid #fff;border-bottom:1px solid #fff;box-shadow:inset 1px 1px 0 #c4c4c4;"></div>
<div style="position:absolute;left:62.00px;top:142.25px;font-size:8.8px;line-height:8.8px;color:#000;white-space:pre;transform:scaleX(0.7650);transform-origin:0 0;">10.6 mA</div>
<div style="position:absolute;left:104.00px;top:142.25px;font-size:8.8px;line-height:8.8px;color:#000;white-space:pre;transform:scaleX(0.7100);transform-origin:0 0;">Cyl.</div>
<div style="position:absolute;left:118.21px;top:142.25px;font-size:8.8px;line-height:8.8px;color:#000;white-space:pre;transform:scaleX(0.8000);transform-origin:100% 0;">6</div>
<div style="position:absolute;left:124.40px;top:140.60px;width:37.60px;height:11.60px;background:#f0f0f0;box-sizing:border-box;border-top:1px solid #a0a0a0;border-left:1px solid #a0a0a0;border-right:1px solid #fff;border-bottom:1px solid #fff;box-shadow:inset 1px 1px 0 #c4c4c4;"></div>
<div style="position:absolute;left:126.40px;top:142.25px;font-size:8.8px;line-height:8.8px;color:#000;white-space:pre;transform:scaleX(0.7650);transform-origin:0 0;">21.9 ms</div>
<div style="position:absolute;left:163.00px;top:140.60px;width:38.00px;height:11.60px;background:#f0f0f0;box-sizing:border-box;border-top:1px solid #a0a0a0;border-left:1px solid #a0a0a0;border-right:1px solid #fff;border-bottom:1px solid #fff;box-shadow:inset 1px 1px 0 #c4c4c4;"></div>
<div style="position:absolute;left:165.00px;top:142.25px;font-size:8.8px;line-height:8.8px;color:#000;white-space:pre;transform:scaleX(0.7650);transform-origin:0 0;">1.4  &lt;°</div>
<div style="position:absolute;left:220.30px;top:142.25px;font-size:8.8px;line-height:8.8px;color:#000;white-space:pre;transform:scaleX(0.7100);transform-origin:0 0;">Cyl.</div>
<div style="position:absolute;left:233.81px;top:142.25px;font-size:8.8px;line-height:8.8px;color:#000;white-space:pre;transform:scaleX(0.8000);transform-origin:100% 0;">6</div>
<div style="position:absolute;left:240.00px;top:140.60px;width:37.50px;height:11.60px;background:#f0f0f0;box-sizing:border-box;border-top:1px solid #a0a0a0;border-left:1px solid #a0a0a0;border-right:1px solid #fff;border-bottom:1px solid #fff;box-shadow:inset 1px 1px 0 #c4c4c4;"></div>
<div style="position:absolute;left:242.00px;top:142.25px;font-size:8.8px;line-height:8.8px;color:#000;white-space:pre;transform:scaleX(0.7650);transform-origin:0 0;">35.7 ms</div>
<div style="position:absolute;left:323.40px;top:142.25px;font-size:8.8px;line-height:8.8px;color:#000;white-space:pre;transform:scaleX(0.7100);transform-origin:0 0;">Cyl.</div>
<div style="position:absolute;left:337.56px;top:142.25px;font-size:8.8px;line-height:8.8px;color:#000;white-space:pre;transform:scaleX(0.8000);transform-origin:100% 0;">6</div>
<div style="position:absolute;left:343.75px;top:140.60px;width:37.75px;height:11.60px;background:#f0f0f0;box-sizing:border-box;border-top:1px solid #a0a0a0;border-left:1px solid #a0a0a0;border-right:1px solid #fff;border-bottom:1px solid #fff;box-shadow:inset 1px 1px 0 #c4c4c4;"></div>
<div style="position:absolute;left:345.75px;top:142.25px;font-size:8.8px;line-height:8.8px;color:#000;white-space:pre;transform:scaleX(0.7650);transform-origin:0 0;">0.8 ms</div>
<div style="position:absolute;left:382.80px;top:140.60px;width:37.70px;height:11.60px;background:#f0f0f0;box-sizing:border-box;border-top:1px solid #a0a0a0;border-left:1px solid #a0a0a0;border-right:1px solid #fff;border-bottom:1px solid #fff;box-shadow:inset 1px 1px 0 #c4c4c4;"></div>
<div style="position:absolute;left:384.80px;top:142.25px;font-size:8.8px;line-height:8.8px;color:#000;white-space:pre;transform:scaleX(0.7650);transform-origin:0 0;">0.8 ms</div>
<div style="position:absolute;left:421.25px;top:140.60px;width:37.75px;height:11.60px;background:#f0f0f0;box-sizing:border-box;border-top:1px solid #a0a0a0;border-left:1px solid #a0a0a0;border-right:1px solid #fff;border-bottom:1px solid #fff;box-shadow:inset 1px 1px 0 #c4c4c4;"></div>
<div style="position:absolute;left:423.25px;top:142.25px;font-size:8.8px;line-height:8.8px;color:#000;white-space:pre;transform:scaleX(0.7650);transform-origin:0 0;">0.8 ms</div>
<div style="position:absolute;left:465.00px;top:142.25px;font-size:8.8px;line-height:8.8px;color:#000;white-space:pre;transform:scaleX(0.7100);transform-origin:0 0;">Cyl.</div>
<div style="position:absolute;left:479.11px;top:142.25px;font-size:8.8px;line-height:8.8px;color:#000;white-space:pre;transform:scaleX(0.8000);transform-origin:100% 0;">6</div>
<div style="position:absolute;left:485.30px;top:140.60px;width:37.70px;height:11.60px;background:#f0f0f0;box-sizing:border-box;border-top:1px solid #a0a0a0;border-left:1px solid #a0a0a0;border-right:1px solid #fff;border-bottom:1px solid #fff;box-shadow:inset 1px 1px 0 #c4c4c4;"></div>
<div style="position:absolute;left:487.30px;top:142.25px;font-size:8.8px;line-height:8.8px;color:#000;white-space:pre;transform:scaleX(0.7650);transform-origin:0 0;">0.8 ms</div>
<div style="position:absolute;left:524.00px;top:140.60px;width:37.80px;height:11.60px;background:#f0f0f0;box-sizing:border-box;border-top:1px solid #a0a0a0;border-left:1px solid #a0a0a0;border-right:1px solid #fff;border-bottom:1px solid #fff;box-shadow:inset 1px 1px 0 #c4c4c4;"></div>
<div style="position:absolute;left:526.00px;top:142.25px;font-size:8.8px;line-height:8.8px;color:#000;white-space:pre;transform:scaleX(0.7650);transform-origin:0 0;">0.8 ms</div>
<div style="position:absolute;left:562.50px;top:140.60px;width:37.80px;height:11.60px;background:#f0f0f0;box-sizing:border-box;border-top:1px solid #a0a0a0;border-left:1px solid #a0a0a0;border-right:1px solid #fff;border-bottom:1px solid #fff;box-shadow:inset 1px 1px 0 #c4c4c4;"></div>
<div style="position:absolute;left:564.50px;top:142.25px;font-size:8.8px;line-height:8.8px;color:#000;white-space:pre;transform:scaleX(0.7650);transform-origin:0 0;">0.8 ms</div>
<div style="position:absolute;left:0.90px;top:156.35px;font-size:8.8px;line-height:8.8px;color:#000;white-space:pre;transform:scaleX(0.7100);transform-origin:0 0;">Cyl.</div>
<div style="position:absolute;left:15.06px;top:156.35px;font-size:8.8px;line-height:8.8px;color:#000;white-space:pre;transform:scaleX(0.8000);transform-origin:100% 0;">7</div>
<div style="position:absolute;left:21.25px;top:154.70px;width:37.35px;height:11.60px;background:#f0f0f0;box-sizing:border-box;border-top:1px solid #a0a0a0;border-left:1px solid #a0a0a0;border-right:1px solid #fff;border-bottom:1px solid #fff;box-shadow:inset 1px 1px 0 #c4c4c4;"></div>
<div style="position:absolute;left:23.25px;top:156.35px;font-size:8.8px;line-height:8.8px;color:#000;white-space:pre;transform:scaleX(0.7650);transform-origin:0 0;">4.9 mA</div>
<div style="position:absolute;left:60.00px;top:154.70px;width:37.30px;height:11.60px;background:#f0f0f0;box-sizing:border-box;border-top:1px solid #a0a0a0;border-left:1px solid #a0a0a0;border-right:1px solid #fff;border-bottom:1px solid #fff;box-shadow:inset 1px 1px 0 #c4c4c4;"></div>
<div style="position:absolute;left:62.00px;top:156.35px;font-size:8.8px;line-height:8.8px;color:#000;white-space:pre;transform:scaleX(0.7650);transform-origin:0 0;">10.7 mA</div>
<div style="position:absolute;left:104.00px;top:156.35px;font-size:8.8px;line-height:8.8px;color:#000;white-space:pre;transform:scaleX(0.7100);transform-origin:0 0;">Cyl.</div>
<div style="position:absolute;left:118.21px;top:156.35px;font-size:8.8px;line-height:8.8px;color:#000;white-space:pre;transform:scaleX(0.8000);transform-origin:100% 0;">7</div>
<div style="position:absolute;left:124.40px;top:154.70px;width:37.60px;height:11.60px;background:#f0f0f0;box-sizing:border-box;border-top:1px solid #a0a0a0;border-left:1px solid #a0a0a0;border-right:1px solid #fff;border-bottom:1px solid #fff;box-shadow:inset 1px 1px 0 #c4c4c4;"></div>
<div style="position:absolute;left:126.40px;top:156.35px;font-size:8.8px;line-height:8.8px;color:#000;white-space:pre;transform:scaleX(0.7650);transform-origin:0 0;">25.4 ms</div>
<div style="position:absolute;left:163.00px;top:154.70px;width:38.00px;height:11.60px;background:#f0f0f0;box-sizing:border-box;border-top:1px solid #a0a0a0;border-left:1px solid #a0a0a0;border-right:1px solid #fff;border-bottom:1px solid #fff;box-shadow:inset 1px 1px 0 #c4c4c4;"></div>
<div style="position:absolute;left:165.00px;top:156.35px;font-size:8.8px;line-height:8.8px;color:#000;white-space:pre;transform:scaleX(0.7650);transform-origin:0 0;">2.8  &lt;°</div>
<div style="position:absolute;left:220.30px;top:156.35px;font-size:8.8px;line-height:8.8px;color:#000;white-space:pre;transform:scaleX(0.7100);transform-origin:0 0;">Cyl.</div>
<div style="position:absolute;left:233.81px;top:156.35px;font-size:8.8px;line-height:8.8px;color:#000;white-space:pre;transform:scaleX(0.8000);transform-origin:100% 0;">7</div>
<div style="position:absolute;left:240.00px;top:154.70px;width:37.50px;height:11.60px;background:#f0f0f0;box-sizing:border-box;border-top:1px solid #a0a0a0;border-left:1px solid #a0a0a0;border-right:1px solid #fff;border-bottom:1px solid #fff;box-shadow:inset 1px 1px 0 #c4c4c4;"></div>
<div style="position:absolute;left:242.00px;top:156.35px;font-size:8.8px;line-height:8.8px;color:#000;white-space:pre;transform:scaleX(0.7650);transform-origin:0 0;">39.0 ms</div>
<div style="position:absolute;left:323.40px;top:156.35px;font-size:8.8px;line-height:8.8px;color:#000;white-space:pre;transform:scaleX(0.7100);transform-origin:0 0;">Cyl.</div>
<div style="position:absolute;left:337.56px;top:156.35px;font-size:8.8px;line-height:8.8px;color:#000;white-space:pre;transform:scaleX(0.8000);transform-origin:100% 0;">7</div>
<div style="position:absolute;left:343.75px;top:154.70px;width:37.75px;height:11.60px;background:#f0f0f0;box-sizing:border-box;border-top:1px solid #a0a0a0;border-left:1px solid #a0a0a0;border-right:1px solid #fff;border-bottom:1px solid #fff;box-shadow:inset 1px 1px 0 #c4c4c4;"></div>
<div style="position:absolute;left:345.75px;top:156.35px;font-size:8.8px;line-height:8.8px;color:#000;white-space:pre;transform:scaleX(0.7650);transform-origin:0 0;">0.8 ms</div>
<div style="position:absolute;left:382.80px;top:154.70px;width:37.70px;height:11.60px;background:#f0f0f0;box-sizing:border-box;border-top:1px solid #a0a0a0;border-left:1px solid #a0a0a0;border-right:1px solid #fff;border-bottom:1px solid #fff;box-shadow:inset 1px 1px 0 #c4c4c4;"></div>
<div style="position:absolute;left:384.80px;top:156.35px;font-size:8.8px;line-height:8.8px;color:#000;white-space:pre;transform:scaleX(0.7650);transform-origin:0 0;">0.8 ms</div>
<div style="position:absolute;left:421.25px;top:154.70px;width:37.75px;height:11.60px;background:#f0f0f0;box-sizing:border-box;border-top:1px solid #a0a0a0;border-left:1px solid #a0a0a0;border-right:1px solid #fff;border-bottom:1px solid #fff;box-shadow:inset 1px 1px 0 #c4c4c4;"></div>
<div style="position:absolute;left:423.25px;top:156.35px;font-size:8.8px;line-height:8.8px;color:#000;white-space:pre;transform:scaleX(0.7650);transform-origin:0 0;">0.9 ms</div>
<div style="position:absolute;left:465.00px;top:156.35px;font-size:8.8px;line-height:8.8px;color:#000;white-space:pre;transform:scaleX(0.7100);transform-origin:0 0;">Cyl.</div>
<div style="position:absolute;left:479.11px;top:156.35px;font-size:8.8px;line-height:8.8px;color:#000;white-space:pre;transform:scaleX(0.8000);transform-origin:100% 0;">7</div>
<div style="position:absolute;left:485.30px;top:154.70px;width:37.70px;height:11.60px;background:#f0f0f0;box-sizing:border-box;border-top:1px solid #a0a0a0;border-left:1px solid #a0a0a0;border-right:1px solid #fff;border-bottom:1px solid #fff;box-shadow:inset 1px 1px 0 #c4c4c4;"></div>
<div style="position:absolute;left:487.30px;top:156.35px;font-size:8.8px;line-height:8.8px;color:#000;white-space:pre;transform:scaleX(0.7650);transform-origin:0 0;">0.8 ms</div>
<div style="position:absolute;left:524.00px;top:154.70px;width:37.80px;height:11.60px;background:#f0f0f0;box-sizing:border-box;border-top:1px solid #a0a0a0;border-left:1px solid #a0a0a0;border-right:1px solid #fff;border-bottom:1px solid #fff;box-shadow:inset 1px 1px 0 #c4c4c4;"></div>
<div style="position:absolute;left:526.00px;top:156.35px;font-size:8.8px;line-height:8.8px;color:#000;white-space:pre;transform:scaleX(0.7650);transform-origin:0 0;">0.8 ms</div>
<div style="position:absolute;left:562.50px;top:154.70px;width:37.80px;height:11.60px;background:#f0f0f0;box-sizing:border-box;border-top:1px solid #a0a0a0;border-left:1px solid #a0a0a0;border-right:1px solid #fff;border-bottom:1px solid #fff;box-shadow:inset 1px 1px 0 #c4c4c4;"></div>
<div style="position:absolute;left:564.50px;top:156.35px;font-size:8.8px;line-height:8.8px;color:#000;white-space:pre;transform:scaleX(0.7650);transform-origin:0 0;">0.8 ms</div>
<div style="position:absolute;left:279.00px;top:256.92px;font-size:8.6px;line-height:8.6px;color:#000;white-space:pre;transform:scaleX(0.7900);transform-origin:0 0;">"&lt;°" = deg CA</div>
<div style="position:absolute;left:0.00px;top:269.00px;width:1024.00px;height:1.00px;background:#6b6b6b;"></div>
<div style="position:absolute;left:0.00px;top:270.00px;width:1024.00px;height:11.00px;background:#99b4d1;"></div>
<div style="position:absolute;left:2.75px;top:272.24px;font-size:8.7px;line-height:8.7px;font-weight:bold;color:#111;white-space:pre;transform:scaleX(0.9959);transform-origin:0 0;">Journal</div>
<div style="position:absolute;left:61.50px;top:272.24px;font-size:8.7px;line-height:8.7px;font-weight:bold;color:#111;white-space:pre;transform:scaleX(0.9240);transform-origin:0 0;">(R3505)</div>
<div style="position:absolute;left:3.00px;top:286.00px;width:101.00px;height:11.80px;background:#f0f0f0;box-sizing:border-box;border-top:1px solid #a0a0a0;border-left:1px solid #a0a0a0;border-right:1px solid #fff;border-bottom:1px solid #fff;box-shadow:inset 1px 1px 0 #c4c4c4;"></div>
<div style="position:absolute;left:9.57px;top:288.44px;font-size:8.7px;line-height:8.7px;color:#222;white-space:pre;transform:scaleX(0.8000);transform-origin:50% 0;">WECS Passive Failure</div>
<div style="position:absolute;left:110.00px;top:286.00px;width:106.00px;height:11.80px;background:#f0f0f0;box-sizing:border-box;border-top:1px solid #a0a0a0;border-left:1px solid #a0a0a0;border-right:1px solid #fff;border-bottom:1px solid #fff;box-shadow:inset 1px 1px 0 #c4c4c4;"></div>
<div style="position:absolute;left:116.66px;top:288.44px;font-size:8.7px;line-height:8.7px;color:#222;white-space:pre;transform:scaleX(0.8000);transform-origin:50% 0;">WECS Common Failure</div>
<div style="position:absolute;left:222.00px;top:286.00px;width:106.00px;height:11.80px;background:#f0f0f0;box-sizing:border-box;border-top:1px solid #a0a0a0;border-left:1px solid #a0a0a0;border-right:1px solid #fff;border-bottom:1px solid #fff;box-shadow:inset 1px 1px 0 #c4c4c4;"></div>
<div style="position:absolute;left:228.90px;top:288.44px;font-size:8.7px;line-height:8.7px;color:#222;white-space:pre;transform:scaleX(0.8000);transform-origin:50% 0;">WECS Pressure Failure</div>
<div style="position:absolute;left:334.00px;top:286.00px;width:106.00px;height:11.80px;background:#f0f0f0;box-sizing:border-box;border-top:1px solid #a0a0a0;border-left:1px solid #a0a0a0;border-right:1px solid #fff;border-bottom:1px solid #fff;box-shadow:inset 1px 1px 0 #c4c4c4;"></div>
<div style="position:absolute;left:342.35px;top:288.44px;font-size:8.7px;line-height:8.7px;color:#222;white-space:pre;transform:scaleX(0.8000);transform-origin:50% 0;">WECS Cylinder Failure</div>
<div style="position:absolute;left:446.00px;top:286.00px;width:107.00px;height:11.80px;background:#f0f0f0;box-sizing:border-box;border-top:1px solid #a0a0a0;border-left:1px solid #a0a0a0;border-right:1px solid #fff;border-bottom:1px solid #fff;box-shadow:inset 1px 1px 0 #c4c4c4;"></div>
<div style="position:absolute;left:457.50px;top:288.44px;font-size:8.7px;line-height:8.7px;color:#222;white-space:pre;transform:scaleX(0.8000);transform-origin:50% 0;">WECS Critical Failure</div>
<div style="position:absolute;left:559.00px;top:286.00px;width:106.00px;height:11.80px;background:#f0f0f0;box-sizing:border-box;border-top:1px solid #a0a0a0;border-left:1px solid #a0a0a0;border-right:1px solid #fff;border-bottom:1px solid #fff;box-shadow:inset 1px 1px 0 #c4c4c4;"></div>
<div style="position:absolute;left:344.50px;top:305.00px;width:7.50px;height:7.50px;box-sizing:border-box;border-top:1px solid #8a8a8a;border-left:1px solid #8a8a8a;border-right:1px solid #e4e4e4;border-bottom:1px solid #e4e4e4;box-shadow:inset 1px 1px 0 #b8b8b8;background:#fff;"></div>
<div style="position:absolute;left:356.00px;top:305.32px;font-size:8.6px;line-height:8.6px;color:#111;white-space:pre;transform:scaleX(0.8260);transform-origin:0 0;">Hide restored logs</div>
<div style="position:absolute;left:424.80px;top:305.00px;width:7.50px;height:7.50px;box-sizing:border-box;border-top:1px solid #8a8a8a;border-left:1px solid #8a8a8a;border-right:1px solid #e4e4e4;border-bottom:1px solid #e4e4e4;box-shadow:inset 1px 1px 0 #b8b8b8;background:#fff;"></div>
<div style="position:absolute;left:436.60px;top:305.32px;font-size:8.6px;line-height:8.6px;color:#111;white-space:pre;transform:scaleX(0.8260);transform-origin:0 0;">Hide acknowledged logs</div>
<div style="position:absolute;left:600.40px;top:305.00px;width:7.50px;height:7.50px;box-sizing:border-box;border-top:1px solid #8a8a8a;border-left:1px solid #8a8a8a;border-right:1px solid #e4e4e4;border-bottom:1px solid #e4e4e4;box-shadow:inset 1px 1px 0 #b8b8b8;background:#fff;"></div>
<div style="position:absolute;left:613.00px;top:305.32px;font-size:8.6px;line-height:8.6px;color:#111;white-space:pre;transform:scaleX(0.8260);transform-origin:0 0;">Hide events</div>
<div style="position:absolute;left:3.00px;top:302.20px;width:655.00px;height:273.80px;box-sizing:border-box;border-top:1px solid #a9a9a9;border-left:1px solid #a9a9a9;"></div>
<div class="n" style="position:absolute;left:5.60px;top:305.55px;font-size:8.8px;line-height:8.8px;color:#000;white-space:pre;transform:scaleX(0.9742);transform-origin:0 0;-webkit-text-stroke:0.35px #000;">JOURNAL</div>
<div style="position:absolute;left:3.50px;top:315.20px;width:654.00px;height:260.80px;background:#fff;"></div>
<div style="position:absolute;left:3.50px;top:315.20px;width:24.50px;height:260.80px;background:#f0f0f0;"></div>
<div style="position:absolute;left:31.00px;top:315.20px;width:616.00px;height:10.80px;background:#f4f4f4;"></div>
<div style="position:absolute;left:3.50px;top:315.20px;width:654.00px;height:1.00px;background:#555;"></div>
<div style="position:absolute;left:3.50px;top:325.20px;width:643.50px;height:1.00px;background:#555;"></div>
<div style="position:absolute;left:33.00px;top:316.72px;font-size:8.6px;line-height:8.6px;color:#333;white-space:pre;transform:scaleX(0.8340);transform-origin:0 0;">TYPE</div>
<div style="position:absolute;left:77.60px;top:316.72px;font-size:8.6px;line-height:8.6px;color:#333;white-space:pre;transform:scaleX(0.8340);transform-origin:0 0;">CYL</div>
<div style="position:absolute;left:97.50px;top:316.72px;font-size:8.6px;line-height:8.6px;color:#333;white-space:pre;transform:scaleX(0.8340);transform-origin:0 0;">DESIGNATION</div>
<div style="position:absolute;left:478.60px;top:316.72px;font-size:8.6px;line-height:8.6px;color:#333;white-space:pre;transform:scaleX(0.8340);transform-origin:0 0;">APPEARING TIME</div>
<div style="position:absolute;left:569.70px;top:316.72px;font-size:8.6px;line-height:8.6px;color:#333;white-space:pre;transform:scaleX(0.8340);transform-origin:0 0;">RESTORING TIME</div>
<div style="position:absolute;left:3.50px;top:326.00px;width:24.50px;height:10.00px;box-sizing:border-box;border-bottom:1px solid #6e6e6e;border-right:1px solid #6e6e6e;background:#f0f0f0;box-shadow:inset 1px 1px 0 #fff;"></div>
<div style="position:absolute;left:31.00px;top:326.00px;width:44.60px;height:9.40px;background:#ffff00;"></div>
<div style="position:absolute;left:75.60px;top:326.00px;width:401.00px;height:9.40px;background:#fff;"></div>
<div style="position:absolute;left:476.60px;top:326.00px;width:170.40px;height:9.40px;background:#ffff00;"></div>
<div style="position:absolute;left:31.00px;top:335.40px;width:616.00px;height:0.80px;background:#b4b4b4;"></div>
<div style="position:absolute;left:32.30px;top:327.32px;font-size:8.6px;line-height:8.6px;color:#000;white-space:pre;transform:scaleX(0.7926);transform-origin:0 0;">Common Fail</div>
<div style="position:absolute;left:77.50px;top:327.32px;font-size:8.6px;line-height:8.6px;color:#000;white-space:pre;transform:scaleX(0.8800);transform-origin:0 0;">7</div>
<div style="position:absolute;left:96.50px;top:327.32px;font-size:8.6px;line-height:8.6px;color:#000;white-space:pre;transform:scaleX(0.8188);transform-origin:0 0;">ME Injection Timing Failure Cylinder #7 (ID 89)</div>
<div style="position:absolute;left:478.20px;top:327.32px;font-size:8.6px;line-height:8.6px;color:#000;white-space:pre;transform:scaleX(0.8580);transform-origin:0 0;">2/10/2023  6:23:05 am.627</div>
<div style="position:absolute;left:569.60px;top:327.32px;font-size:8.6px;line-height:8.6px;color:#000;white-space:pre;transform:scaleX(0.8580);transform-origin:0 0;">2/10/2023  6:23:16 am.</div>
<div style="position:absolute;left:3.50px;top:336.00px;width:24.50px;height:10.00px;box-sizing:border-box;border-bottom:1px solid #6e6e6e;border-right:1px solid #6e6e6e;background:#f0f0f0;box-shadow:inset 1px 1px 0 #fff;"></div>
<div style="position:absolute;left:31.00px;top:336.00px;width:44.60px;height:9.40px;background:#00ffff;"></div>
<div style="position:absolute;left:75.60px;top:336.00px;width:401.00px;height:9.40px;background:#fff;"></div>
<div style="position:absolute;left:476.60px;top:336.00px;width:170.40px;height:9.40px;background:#00ffff;"></div>
<div style="position:absolute;left:31.00px;top:345.40px;width:616.00px;height:0.80px;background:#b4b4b4;"></div>
<div style="position:absolute;left:32.30px;top:337.32px;font-size:8.6px;line-height:8.6px;color:#000;white-space:pre;transform:scaleX(0.8400);transform-origin:0 0;">Message</div>
<div style="position:absolute;left:77.50px;top:337.32px;font-size:8.6px;line-height:8.6px;color:#000;white-space:pre;transform:scaleX(0.8800);transform-origin:0 0;">7</div>
<div style="position:absolute;left:96.50px;top:337.32px;font-size:8.6px;line-height:8.6px;color:#000;white-space:pre;transform:scaleX(0.8150);transform-origin:0 0;">ME Inj. Time Too Long (ID 88)</div>
<div style="position:absolute;left:478.20px;top:337.32px;font-size:8.6px;line-height:8.6px;color:#000;white-space:pre;transform:scaleX(0.8580);transform-origin:0 0;">2/10/2023  6:23:05 am -----</div>
<div style="position:absolute;left:569.60px;top:337.32px;font-size:8.6px;line-height:8.6px;color:#000;white-space:pre;transform:scaleX(0.8580);transform-origin:0 0;">2/10/2023  6:23:15 am.</div>
<div style="position:absolute;left:3.50px;top:346.00px;width:24.50px;height:10.00px;box-sizing:border-box;border-bottom:1px solid #6e6e6e;border-right:1px solid #6e6e6e;background:#f0f0f0;box-shadow:inset 1px 1px 0 #fff;"></div>
<div style="position:absolute;left:31.00px;top:346.00px;width:44.60px;height:9.40px;background:#ffff00;"></div>
<div style="position:absolute;left:75.60px;top:346.00px;width:401.00px;height:9.40px;background:#fff;"></div>
<div style="position:absolute;left:476.60px;top:346.00px;width:170.40px;height:9.40px;background:#ffff00;"></div>
<div style="position:absolute;left:31.00px;top:355.40px;width:616.00px;height:0.80px;background:#b4b4b4;"></div>
<div style="position:absolute;left:32.30px;top:347.32px;font-size:8.6px;line-height:8.6px;color:#000;white-space:pre;transform:scaleX(0.7926);transform-origin:0 0;">Common Fail</div>
<div style="position:absolute;left:77.50px;top:347.32px;font-size:8.6px;line-height:8.6px;color:#000;white-space:pre;transform:scaleX(0.8800);transform-origin:0 0;">7</div>
<div style="position:absolute;left:96.50px;top:347.32px;font-size:8.6px;line-height:8.6px;color:#000;white-space:pre;transform:scaleX(0.8188);transform-origin:0 0;">ME Injection Timing Failure Cylinder #7 (ID 89)</div>
<div style="position:absolute;left:478.20px;top:347.32px;font-size:8.6px;line-height:8.6px;color:#000;white-space:pre;transform:scaleX(0.8580);transform-origin:0 0;">2/10/2023  6:21:47 am.426</div>
<div style="position:absolute;left:569.60px;top:347.32px;font-size:8.6px;line-height:8.6px;color:#000;white-space:pre;transform:scaleX(0.8580);transform-origin:0 0;">2/10/2023  6:22:04 am.</div>
<div style="position:absolute;left:3.50px;top:356.00px;width:24.50px;height:10.00px;box-sizing:border-box;border-bottom:1px solid #6e6e6e;border-right:1px solid #6e6e6e;background:#f0f0f0;box-shadow:inset 1px 1px 0 #fff;"></div>
<div style="position:absolute;left:31.00px;top:356.00px;width:44.60px;height:9.40px;background:#00ffff;"></div>
<div style="position:absolute;left:75.60px;top:356.00px;width:401.00px;height:9.40px;background:#fff;"></div>
<div style="position:absolute;left:476.60px;top:356.00px;width:170.40px;height:9.40px;background:#00ffff;"></div>
<div style="position:absolute;left:31.00px;top:365.40px;width:616.00px;height:0.80px;background:#b4b4b4;"></div>
<div style="position:absolute;left:32.30px;top:357.32px;font-size:8.6px;line-height:8.6px;color:#000;white-space:pre;transform:scaleX(0.8400);transform-origin:0 0;">Message</div>
<div style="position:absolute;left:77.50px;top:357.32px;font-size:8.6px;line-height:8.6px;color:#000;white-space:pre;transform:scaleX(0.8800);transform-origin:0 0;">7</div>
<div style="position:absolute;left:96.50px;top:357.32px;font-size:8.6px;line-height:8.6px;color:#000;white-space:pre;transform:scaleX(0.8150);transform-origin:0 0;">ME Inj. Time Too Long (ID 88)</div>
<div style="position:absolute;left:478.20px;top:357.32px;font-size:8.6px;line-height:8.6px;color:#000;white-space:pre;transform:scaleX(0.8580);transform-origin:0 0;">2/10/2023  6:21:47 am -----</div>
<div style="position:absolute;left:569.60px;top:357.32px;font-size:8.6px;line-height:8.6px;color:#000;white-space:pre;transform:scaleX(0.8580);transform-origin:0 0;">2/10/2023  6:22:04 am.</div>
<div style="position:absolute;left:3.50px;top:366.00px;width:24.50px;height:10.00px;box-sizing:border-box;border-bottom:1px solid #6e6e6e;border-right:1px solid #6e6e6e;background:#f0f0f0;box-shadow:inset 1px 1px 0 #fff;"></div>
<div style="position:absolute;left:31.00px;top:366.00px;width:44.60px;height:9.40px;background:#ffff00;"></div>
<div style="position:absolute;left:75.60px;top:366.00px;width:401.00px;height:9.40px;background:#fff;"></div>
<div style="position:absolute;left:476.60px;top:366.00px;width:170.40px;height:9.40px;background:#ffff00;"></div>
<div style="position:absolute;left:31.00px;top:375.40px;width:616.00px;height:0.80px;background:#b4b4b4;"></div>
<div style="position:absolute;left:32.30px;top:367.32px;font-size:8.6px;line-height:8.6px;color:#000;white-space:pre;transform:scaleX(0.7926);transform-origin:0 0;">Common Fail</div>
<div style="position:absolute;left:77.50px;top:367.32px;font-size:8.6px;line-height:8.6px;color:#000;white-space:pre;transform:scaleX(0.8800);transform-origin:0 0;">7</div>
<div style="position:absolute;left:96.50px;top:367.32px;font-size:8.6px;line-height:8.6px;color:#000;white-space:pre;transform:scaleX(0.8188);transform-origin:0 0;">ME Injection Timing Failure Cylinder #7 (ID 89)</div>
<div style="position:absolute;left:478.20px;top:367.32px;font-size:8.6px;line-height:8.6px;color:#000;white-space:pre;transform:scaleX(0.8580);transform-origin:0 0;">2/10/2023  6:17:14 am.146</div>
<div style="position:absolute;left:569.60px;top:367.32px;font-size:8.6px;line-height:8.6px;color:#000;white-space:pre;transform:scaleX(0.8580);transform-origin:0 0;">2/10/2023  6:17:21 am.</div>
<div style="position:absolute;left:3.50px;top:376.00px;width:24.50px;height:10.00px;box-sizing:border-box;border-bottom:1px solid #6e6e6e;border-right:1px solid #6e6e6e;background:#f0f0f0;box-shadow:inset 1px 1px 0 #fff;"></div>
<div style="position:absolute;left:31.00px;top:376.00px;width:44.60px;height:9.40px;background:#00ffff;"></div>
<div style="position:absolute;left:75.60px;top:376.00px;width:401.00px;height:9.40px;background:#fff;"></div>
<div style="position:absolute;left:476.60px;top:376.00px;width:170.40px;height:9.40px;background:#00ffff;"></div>
<div style="position:absolute;left:31.00px;top:385.40px;width:616.00px;height:0.80px;background:#b4b4b4;"></div>
<div style="position:absolute;left:32.30px;top:377.32px;font-size:8.6px;line-height:8.6px;color:#000;white-space:pre;transform:scaleX(0.8400);transform-origin:0 0;">Message</div>
<div style="position:absolute;left:77.50px;top:377.32px;font-size:8.6px;line-height:8.6px;color:#000;white-space:pre;transform:scaleX(0.8800);transform-origin:0 0;">7</div>
<div style="position:absolute;left:96.50px;top:377.32px;font-size:8.6px;line-height:8.6px;color:#000;white-space:pre;transform:scaleX(0.8150);transform-origin:0 0;">ME Inj. Time Too Long (ID 88)</div>
<div style="position:absolute;left:478.20px;top:377.32px;font-size:8.6px;line-height:8.6px;color:#000;white-space:pre;transform:scaleX(0.8580);transform-origin:0 0;">2/10/2023  6:17:14 am -----</div>
<div style="position:absolute;left:569.60px;top:377.32px;font-size:8.6px;line-height:8.6px;color:#000;white-space:pre;transform:scaleX(0.8580);transform-origin:0 0;">2/10/2023  6:17:21 am.</div>
<div style="position:absolute;left:3.50px;top:386.00px;width:24.50px;height:10.00px;box-sizing:border-box;border-bottom:1px solid #6e6e6e;border-right:1px solid #6e6e6e;background:#f0f0f0;box-shadow:inset 1px 1px 0 #fff;"></div>
<div style="position:absolute;left:31.00px;top:386.00px;width:44.60px;height:9.40px;background:#ffff00;"></div>
<div style="position:absolute;left:75.60px;top:386.00px;width:401.00px;height:9.40px;background:#fff;"></div>
<div style="position:absolute;left:476.60px;top:386.00px;width:170.40px;height:9.40px;background:#ffff00;"></div>
<div style="position:absolute;left:31.00px;top:395.40px;width:616.00px;height:0.80px;background:#b4b4b4;"></div>
<div style="position:absolute;left:32.30px;top:387.32px;font-size:8.6px;line-height:8.6px;color:#000;white-space:pre;transform:scaleX(0.7926);transform-origin:0 0;">Common Fail</div>
<div style="position:absolute;left:77.50px;top:387.32px;font-size:8.6px;line-height:8.6px;color:#000;white-space:pre;transform:scaleX(0.8800);transform-origin:0 0;">7</div>
<div style="position:absolute;left:96.50px;top:387.32px;font-size:8.6px;line-height:8.6px;color:#000;white-space:pre;transform:scaleX(0.8188);transform-origin:0 0;">ME Injection Timing Failure Cylinder #7 (ID 89)</div>
<div style="position:absolute;left:478.20px;top:387.32px;font-size:8.6px;line-height:8.6px;color:#000;white-space:pre;transform:scaleX(0.8580);transform-origin:0 0;">2/10/2023  6:10:28 am.374</div>
<div style="position:absolute;left:569.60px;top:387.32px;font-size:8.6px;line-height:8.6px;color:#000;white-space:pre;transform:scaleX(0.8580);transform-origin:0 0;">2/10/2023  6:16:13 am.</div>
<div style="position:absolute;left:3.50px;top:396.00px;width:24.50px;height:10.00px;box-sizing:border-box;border-bottom:1px solid #6e6e6e;border-right:1px solid #6e6e6e;background:#f0f0f0;box-shadow:inset 1px 1px 0 #fff;"></div>
<div style="position:absolute;left:31.00px;top:396.00px;width:44.60px;height:9.40px;background:#00ffff;"></div>
<div style="position:absolute;left:75.60px;top:396.00px;width:401.00px;height:9.40px;background:#fff;"></div>
<div style="position:absolute;left:476.60px;top:396.00px;width:170.40px;height:9.40px;background:#00ffff;"></div>
<div style="position:absolute;left:31.00px;top:405.40px;width:616.00px;height:0.80px;background:#b4b4b4;"></div>
<div style="position:absolute;left:32.30px;top:397.32px;font-size:8.6px;line-height:8.6px;color:#000;white-space:pre;transform:scaleX(0.8400);transform-origin:0 0;">Message</div>
<div style="position:absolute;left:77.50px;top:397.32px;font-size:8.6px;line-height:8.6px;color:#000;white-space:pre;transform:scaleX(0.8800);transform-origin:0 0;">7</div>
<div style="position:absolute;left:96.50px;top:397.32px;font-size:8.6px;line-height:8.6px;color:#000;white-space:pre;transform:scaleX(0.8150);transform-origin:0 0;">ME Inj. Time Too Long (ID 88)</div>
<div style="position:absolute;left:478.20px;top:397.32px;font-size:8.6px;line-height:8.6px;color:#000;white-space:pre;transform:scaleX(0.8580);transform-origin:0 0;">2/10/2023  6:10:28 am -----</div>
<div style="position:absolute;left:569.60px;top:397.32px;font-size:8.6px;line-height:8.6px;color:#000;white-space:pre;transform:scaleX(0.8580);transform-origin:0 0;">2/10/2023  6:16:13 am.</div>
<div style="position:absolute;left:3.50px;top:406.00px;width:24.50px;height:10.00px;box-sizing:border-box;border-bottom:1px solid #6e6e6e;border-right:1px solid #6e6e6e;background:#f0f0f0;box-shadow:inset 1px 1px 0 #fff;"></div>
<div style="position:absolute;left:31.00px;top:406.00px;width:44.60px;height:9.40px;background:#ffff00;"></div>
<div style="position:absolute;left:75.60px;top:406.00px;width:401.00px;height:9.40px;background:#fff;"></div>
<div style="position:absolute;left:476.60px;top:406.00px;width:170.40px;height:9.40px;background:#ffff00;"></div>
<div style="position:absolute;left:31.00px;top:415.40px;width:616.00px;height:0.80px;background:#b4b4b4;"></div>
<div style="position:absolute;left:32.30px;top:407.32px;font-size:8.6px;line-height:8.6px;color:#000;white-space:pre;transform:scaleX(0.7926);transform-origin:0 0;">Common Fail</div>
<div style="position:absolute;left:77.50px;top:407.32px;font-size:8.6px;line-height:8.6px;color:#000;white-space:pre;transform:scaleX(0.8800);transform-origin:0 0;">7</div>
<div style="position:absolute;left:96.50px;top:407.32px;font-size:8.6px;line-height:8.6px;color:#000;white-space:pre;transform:scaleX(0.8188);transform-origin:0 0;">ME Injection Timing Failure Cylinder #7 (ID 89)</div>
<div style="position:absolute;left:478.20px;top:407.32px;font-size:8.6px;line-height:8.6px;color:#000;white-space:pre;transform:scaleX(0.8580);transform-origin:0 0;">2/10/2023  6:05:27 am.199</div>
<div style="position:absolute;left:569.60px;top:407.32px;font-size:8.6px;line-height:8.6px;color:#000;white-space:pre;transform:scaleX(0.8580);transform-origin:0 0;">2/10/2023  6:09:12 am.</div>
<div style="position:absolute;left:3.50px;top:416.00px;width:24.50px;height:10.00px;box-sizing:border-box;border-bottom:1px solid #6e6e6e;border-right:1px solid #6e6e6e;background:#f0f0f0;box-shadow:inset 1px 1px 0 #fff;"></div>
<div style="position:absolute;left:31.00px;top:416.00px;width:44.60px;height:9.40px;background:#00ffff;"></div>
<div style="position:absolute;left:75.60px;top:416.00px;width:401.00px;height:9.40px;background:#fff;"></div>
<div style="position:absolute;left:476.60px;top:416.00px;width:170.40px;height:9.40px;background:#00ffff;"></div>
<div style="position:absolute;left:31.00px;top:425.40px;width:616.00px;height:0.80px;background:#b4b4b4;"></div>
<div style="position:absolute;left:32.30px;top:417.32px;font-size:8.6px;line-height:8.6px;color:#000;white-space:pre;transform:scaleX(0.8400);transform-origin:0 0;">Message</div>
<div style="position:absolute;left:77.50px;top:417.32px;font-size:8.6px;line-height:8.6px;color:#000;white-space:pre;transform:scaleX(0.8800);transform-origin:0 0;">7</div>
<div style="position:absolute;left:96.50px;top:417.32px;font-size:8.6px;line-height:8.6px;color:#000;white-space:pre;transform:scaleX(0.8150);transform-origin:0 0;">ME Inj. Time Too Long (ID 88)</div>
<div style="position:absolute;left:478.20px;top:417.32px;font-size:8.6px;line-height:8.6px;color:#000;white-space:pre;transform:scaleX(0.8580);transform-origin:0 0;">2/10/2023  6:05:27 am -----</div>
<div style="position:absolute;left:569.60px;top:417.32px;font-size:8.6px;line-height:8.6px;color:#000;white-space:pre;transform:scaleX(0.8580);transform-origin:0 0;">2/10/2023  6:09:12 am.</div>
<div style="position:absolute;left:3.50px;top:426.00px;width:24.50px;height:10.00px;box-sizing:border-box;border-bottom:1px solid #6e6e6e;border-right:1px solid #6e6e6e;background:#f0f0f0;box-shadow:inset 1px 1px 0 #fff;"></div>
<div style="position:absolute;left:31.00px;top:426.00px;width:44.60px;height:9.40px;background:#ffff00;"></div>
<div style="position:absolute;left:75.60px;top:426.00px;width:401.00px;height:9.40px;background:#fff;"></div>
<div style="position:absolute;left:476.60px;top:426.00px;width:170.40px;height:9.40px;background:#ffff00;"></div>
<div style="position:absolute;left:31.00px;top:435.40px;width:616.00px;height:0.80px;background:#b4b4b4;"></div>
<div style="position:absolute;left:32.30px;top:427.32px;font-size:8.6px;line-height:8.6px;color:#000;white-space:pre;transform:scaleX(0.7926);transform-origin:0 0;">Common Fail</div>
<div style="position:absolute;left:77.50px;top:427.32px;font-size:8.6px;line-height:8.6px;color:#000;white-space:pre;transform:scaleX(0.8800);transform-origin:0 0;">7</div>
<div style="position:absolute;left:96.50px;top:427.32px;font-size:8.6px;line-height:8.6px;color:#000;white-space:pre;transform:scaleX(0.8188);transform-origin:0 0;">ME Injection Timing Failure Cylinder #7 (ID 89)</div>
<div style="position:absolute;left:478.20px;top:427.32px;font-size:8.6px;line-height:8.6px;color:#000;white-space:pre;transform:scaleX(0.8580);transform-origin:0 0;">2/10/2023  6:03:12 am.789</div>
<div style="position:absolute;left:569.60px;top:427.32px;font-size:8.6px;line-height:8.6px;color:#000;white-space:pre;transform:scaleX(0.8580);transform-origin:0 0;">2/10/2023  6:04:04 am.</div>
<div style="position:absolute;left:3.50px;top:436.00px;width:24.50px;height:10.00px;box-sizing:border-box;border-bottom:1px solid #6e6e6e;border-right:1px solid #6e6e6e;background:#f0f0f0;box-shadow:inset 1px 1px 0 #fff;"></div>
<div style="position:absolute;left:31.00px;top:436.00px;width:44.60px;height:9.40px;background:#00ffff;"></div>
<div style="position:absolute;left:75.60px;top:436.00px;width:401.00px;height:9.40px;background:#fff;"></div>
<div style="position:absolute;left:476.60px;top:436.00px;width:170.40px;height:9.40px;background:#00ffff;"></div>
<div style="position:absolute;left:31.00px;top:445.40px;width:616.00px;height:0.80px;background:#b4b4b4;"></div>
<div style="position:absolute;left:32.30px;top:437.32px;font-size:8.6px;line-height:8.6px;color:#000;white-space:pre;transform:scaleX(0.8400);transform-origin:0 0;">Message</div>
<div style="position:absolute;left:77.50px;top:437.32px;font-size:8.6px;line-height:8.6px;color:#000;white-space:pre;transform:scaleX(0.8800);transform-origin:0 0;">7</div>
<div style="position:absolute;left:96.50px;top:437.32px;font-size:8.6px;line-height:8.6px;color:#000;white-space:pre;transform:scaleX(0.8150);transform-origin:0 0;">ME Inj. Time Too Long (ID 88)</div>
<div style="position:absolute;left:478.20px;top:437.32px;font-size:8.6px;line-height:8.6px;color:#000;white-space:pre;transform:scaleX(0.8580);transform-origin:0 0;">2/10/2023  6:03:12 am -----</div>
<div style="position:absolute;left:569.60px;top:437.32px;font-size:8.6px;line-height:8.6px;color:#000;white-space:pre;transform:scaleX(0.8580);transform-origin:0 0;">2/10/2023  6:04:04 am.</div>
<div style="position:absolute;left:3.50px;top:446.00px;width:24.50px;height:10.00px;box-sizing:border-box;border-bottom:1px solid #6e6e6e;border-right:1px solid #6e6e6e;background:#f0f0f0;box-shadow:inset 1px 1px 0 #fff;"></div>
<div style="position:absolute;left:31.00px;top:446.00px;width:44.60px;height:9.40px;background:#ffff00;"></div>
<div style="position:absolute;left:75.60px;top:446.00px;width:401.00px;height:9.40px;background:#fff;"></div>
<div style="position:absolute;left:476.60px;top:446.00px;width:170.40px;height:9.40px;background:#ffff00;"></div>
<div style="position:absolute;left:31.00px;top:455.40px;width:616.00px;height:0.80px;background:#b4b4b4;"></div>
<div style="position:absolute;left:32.30px;top:447.32px;font-size:8.6px;line-height:8.6px;color:#000;white-space:pre;transform:scaleX(0.7926);transform-origin:0 0;">Common Fail</div>
<div style="position:absolute;left:77.50px;top:447.32px;font-size:8.6px;line-height:8.6px;color:#000;white-space:pre;transform:scaleX(0.8800);transform-origin:0 0;">7</div>
<div style="position:absolute;left:96.50px;top:447.32px;font-size:8.6px;line-height:8.6px;color:#000;white-space:pre;transform:scaleX(0.8188);transform-origin:0 0;">ME Injection Timing Failure Cylinder #7 (ID 89)</div>
<div style="position:absolute;left:478.20px;top:447.32px;font-size:8.6px;line-height:8.6px;color:#000;white-space:pre;transform:scaleX(0.8580);transform-origin:0 0;">2/10/2023  5:59:53 am.407</div>
<div style="position:absolute;left:569.60px;top:447.32px;font-size:8.6px;line-height:8.6px;color:#000;white-space:pre;transform:scaleX(0.8580);transform-origin:0 0;">2/10/2023  6:00:21 am.</div>
<div style="position:absolute;left:3.50px;top:456.00px;width:24.50px;height:10.00px;box-sizing:border-box;border-bottom:1px solid #6e6e6e;border-right:1px solid #6e6e6e;background:#f0f0f0;box-shadow:inset 1px 1px 0 #fff;"></div>
<div style="position:absolute;left:31.00px;top:456.00px;width:44.60px;height:9.40px;background:#00ffff;"></div>
<div style="position:absolute;left:75.60px;top:456.00px;width:401.00px;height:9.40px;background:#fff;"></div>
<div style="position:absolute;left:476.60px;top:456.00px;width:170.40px;height:9.40px;background:#00ffff;"></div>
<div style="position:absolute;left:31.00px;top:465.40px;width:616.00px;height:0.80px;background:#b4b4b4;"></div>
<div style="position:absolute;left:32.30px;top:457.32px;font-size:8.6px;line-height:8.6px;color:#000;white-space:pre;transform:scaleX(0.8400);transform-origin:0 0;">Message</div>
<div style="position:absolute;left:77.50px;top:457.32px;font-size:8.6px;line-height:8.6px;color:#000;white-space:pre;transform:scaleX(0.8800);transform-origin:0 0;">7</div>
<div style="position:absolute;left:96.50px;top:457.32px;font-size:8.6px;line-height:8.6px;color:#000;white-space:pre;transform:scaleX(0.8150);transform-origin:0 0;">ME Inj. Time Too Long (ID 88)</div>
<div style="position:absolute;left:478.20px;top:457.32px;font-size:8.6px;line-height:8.6px;color:#000;white-space:pre;transform:scaleX(0.8580);transform-origin:0 0;">2/10/2023  5:59:53 am -----</div>
<div style="position:absolute;left:569.60px;top:457.32px;font-size:8.6px;line-height:8.6px;color:#000;white-space:pre;transform:scaleX(0.8580);transform-origin:0 0;">2/10/2023  6:00:21 am.</div>
<div style="position:absolute;left:3.50px;top:466.00px;width:24.50px;height:10.00px;box-sizing:border-box;border-bottom:1px solid #6e6e6e;border-right:1px solid #6e6e6e;background:#f0f0f0;box-shadow:inset 1px 1px 0 #fff;"></div>
<div style="position:absolute;left:31.00px;top:466.00px;width:44.60px;height:9.40px;background:#00ff00;"></div>
<div style="position:absolute;left:75.60px;top:466.00px;width:401.00px;height:9.40px;background:#00ff00;"></div>
<div style="position:absolute;left:476.60px;top:466.00px;width:170.40px;height:9.40px;background:#00ff00;"></div>
<div style="position:absolute;left:31.00px;top:475.40px;width:616.00px;height:0.80px;background:#b4b4b4;"></div>
<div style="position:absolute;left:32.30px;top:467.32px;font-size:8.6px;line-height:8.6px;color:#000;white-space:pre;transform:scaleX(0.8400);transform-origin:0 0;">Event</div>
<div style="position:absolute;left:77.50px;top:467.32px;font-size:8.6px;line-height:8.6px;color:#000;white-space:pre;transform:scaleX(0.8800);transform-origin:0 0;">1/2</div>
<div style="position:absolute;left:96.50px;top:467.83px;font-size:8px;line-height:8px;font-weight:bold;color:#000;white-space:pre;transform:scaleX(0.9900);transform-origin:0 0;">Ahead RC</div>
<div style="position:absolute;left:478.20px;top:467.32px;font-size:8.6px;line-height:8.6px;color:#000;white-space:pre;transform:scaleX(0.8580);transform-origin:0 0;">2/10/2023  5:42:05 am -----</div>
<svg style="position:absolute;left:14px;top:468.0px" width="6" height="7"><path d="M0.5 0.5 L4.5 3.5 L0.5 6.5 Z" fill="#000"/></svg>
<div style="position:absolute;left:3.50px;top:476.00px;width:24.50px;height:10.00px;box-sizing:border-box;border-bottom:1px solid #6e6e6e;border-right:1px solid #6e6e6e;background:#f0f0f0;box-shadow:inset 1px 1px 0 #fff;"></div>
<div style="position:absolute;left:31.00px;top:476.00px;width:44.60px;height:9.40px;background:#00ff00;"></div>
<div style="position:absolute;left:75.60px;top:476.00px;width:401.00px;height:9.40px;background:#fff;"></div>
<div style="position:absolute;left:476.60px;top:476.00px;width:170.40px;height:9.40px;background:#fff;"></div>
<div style="position:absolute;left:31.00px;top:485.40px;width:616.00px;height:0.80px;background:#b4b4b4;"></div>
<div style="position:absolute;left:32.30px;top:477.32px;font-size:8.6px;line-height:8.6px;color:#000;white-space:pre;transform:scaleX(0.8400);transform-origin:0 0;">Event</div>
<div style="position:absolute;left:77.50px;top:477.32px;font-size:8.6px;line-height:8.6px;color:#000;white-space:pre;transform:scaleX(0.8800);transform-origin:0 0;">1/2</div>
<div style="position:absolute;left:96.50px;top:477.83px;font-size:8px;line-height:8px;font-weight:bold;color:#000;white-space:pre;transform:scaleX(0.9900);transform-origin:0 0;">Stop RC</div>
<div style="position:absolute;left:478.20px;top:477.32px;font-size:8.6px;line-height:8.6px;color:#000;white-space:pre;transform:scaleX(0.8580);transform-origin:0 0;">2/10/2023  5:30:55 am -----</div>
<div style="position:absolute;left:569.60px;top:477.32px;font-size:8.6px;line-height:8.6px;color:#000;white-space:pre;transform:scaleX(0.8580);transform-origin:0 0;">2/10/2023  5:42:05 am</div>
<div style="position:absolute;left:3.50px;top:486.00px;width:24.50px;height:10.00px;box-sizing:border-box;border-bottom:1px solid #6e6e6e;border-right:1px solid #6e6e6e;background:#f0f0f0;box-shadow:inset 1px 1px 0 #fff;"></div>
<div style="position:absolute;left:31.00px;top:486.00px;width:44.60px;height:9.40px;background:#00ffff;"></div>
<div style="position:absolute;left:75.60px;top:486.00px;width:401.00px;height:9.40px;background:#fff;"></div>
<div style="position:absolute;left:476.60px;top:486.00px;width:170.40px;height:9.40px;background:#00ffff;"></div>
<div style="position:absolute;left:31.00px;top:495.40px;width:616.00px;height:0.80px;background:#b4b4b4;"></div>
<div style="position:absolute;left:32.30px;top:487.32px;font-size:8.6px;line-height:8.6px;color:#000;white-space:pre;transform:scaleX(0.8400);transform-origin:0 0;">Message</div>
<div style="position:absolute;left:77.50px;top:487.32px;font-size:8.6px;line-height:8.6px;color:#000;white-space:pre;transform:scaleX(0.8800);transform-origin:0 0;">7</div>
<div style="position:absolute;left:96.50px;top:487.32px;font-size:8.6px;line-height:8.6px;color:#000;white-space:pre;transform:scaleX(0.8150);transform-origin:0 0;">ME Inj. Time Too Long (ID 88)</div>
<div style="position:absolute;left:478.20px;top:487.32px;font-size:8.6px;line-height:8.6px;color:#000;white-space:pre;transform:scaleX(0.8580);transform-origin:0 0;">2/10/2023  5:17:44 am -----</div>
<div style="position:absolute;left:569.60px;top:487.32px;font-size:8.6px;line-height:8.6px;color:#000;white-space:pre;transform:scaleX(0.8580);transform-origin:0 0;">2/10/2023  5:20:45 am.</div>
<div style="position:absolute;left:3.50px;top:496.00px;width:24.50px;height:10.00px;box-sizing:border-box;border-bottom:1px solid #6e6e6e;border-right:1px solid #6e6e6e;background:#f0f0f0;box-shadow:inset 1px 1px 0 #fff;"></div>
<div style="position:absolute;left:31.00px;top:496.00px;width:44.60px;height:9.40px;background:#ffff00;"></div>
<div style="position:absolute;left:75.60px;top:496.00px;width:401.00px;height:9.40px;background:#fff;"></div>
<div style="position:absolute;left:476.60px;top:496.00px;width:170.40px;height:9.40px;background:#ffff00;"></div>
<div style="position:absolute;left:31.00px;top:505.40px;width:616.00px;height:0.80px;background:#b4b4b4;"></div>
<div style="position:absolute;left:32.30px;top:497.32px;font-size:8.6px;line-height:8.6px;color:#000;white-space:pre;transform:scaleX(0.7926);transform-origin:0 0;">Common Fail</div>
<div style="position:absolute;left:77.50px;top:497.32px;font-size:8.6px;line-height:8.6px;color:#000;white-space:pre;transform:scaleX(0.8800);transform-origin:0 0;">7</div>
<div style="position:absolute;left:96.50px;top:497.32px;font-size:8.6px;line-height:8.6px;color:#000;white-space:pre;transform:scaleX(0.8188);transform-origin:0 0;">ME Injection Timing Failure Cylinder #7 (ID 89)</div>
<div style="position:absolute;left:478.20px;top:497.32px;font-size:8.6px;line-height:8.6px;color:#000;white-space:pre;transform:scaleX(0.8580);transform-origin:0 0;">2/10/2023  5:17:43 am.856</div>
<div style="position:absolute;left:569.60px;top:497.32px;font-size:8.6px;line-height:8.6px;color:#000;white-space:pre;transform:scaleX(0.8580);transform-origin:0 0;">2/10/2023  5:20:45 am.</div>
<div style="position:absolute;left:3.50px;top:506.00px;width:24.50px;height:10.00px;box-sizing:border-box;border-bottom:1px solid #6e6e6e;border-right:1px solid #6e6e6e;background:#f0f0f0;box-shadow:inset 1px 1px 0 #fff;"></div>
<div style="position:absolute;left:31.00px;top:506.00px;width:44.60px;height:9.40px;background:#ffff00;"></div>
<div style="position:absolute;left:75.60px;top:506.00px;width:401.00px;height:9.40px;background:#fff;"></div>
<div style="position:absolute;left:476.60px;top:506.00px;width:170.40px;height:9.40px;background:#ffff00;"></div>
<div style="position:absolute;left:31.00px;top:515.40px;width:616.00px;height:0.80px;background:#b4b4b4;"></div>
<div style="position:absolute;left:32.30px;top:507.32px;font-size:8.6px;line-height:8.6px;color:#000;white-space:pre;transform:scaleX(0.7926);transform-origin:0 0;">Common Fail</div>
<div style="position:absolute;left:77.50px;top:507.32px;font-size:8.6px;line-height:8.6px;color:#000;white-space:pre;transform:scaleX(0.8800);transform-origin:0 0;">7</div>
<div style="position:absolute;left:96.50px;top:507.32px;font-size:8.6px;line-height:8.6px;color:#000;white-space:pre;transform:scaleX(0.8188);transform-origin:0 0;">ME Injection Timing Failure Cylinder #7 (ID 89)</div>
<div style="position:absolute;left:478.20px;top:507.32px;font-size:8.6px;line-height:8.6px;color:#000;white-space:pre;transform:scaleX(0.8580);transform-origin:0 0;">2/10/2023  5:09:26 am.622</div>
<div style="position:absolute;left:569.60px;top:507.32px;font-size:8.6px;line-height:8.6px;color:#000;white-space:pre;transform:scaleX(0.8580);transform-origin:0 0;">2/10/2023  5:16:42 am.</div>
<div style="position:absolute;left:3.50px;top:516.00px;width:24.50px;height:10.00px;box-sizing:border-box;border-bottom:1px solid #6e6e6e;border-right:1px solid #6e6e6e;background:#f0f0f0;box-shadow:inset 1px 1px 0 #fff;"></div>
<div style="position:absolute;left:31.00px;top:516.00px;width:44.60px;height:9.40px;background:#00ffff;"></div>
<div style="position:absolute;left:75.60px;top:516.00px;width:401.00px;height:9.40px;background:#fff;"></div>
<div style="position:absolute;left:476.60px;top:516.00px;width:170.40px;height:9.40px;background:#00ffff;"></div>
<div style="position:absolute;left:31.00px;top:525.40px;width:616.00px;height:0.80px;background:#b4b4b4;"></div>
<div style="position:absolute;left:32.30px;top:517.32px;font-size:8.6px;line-height:8.6px;color:#000;white-space:pre;transform:scaleX(0.8400);transform-origin:0 0;">Message</div>
<div style="position:absolute;left:77.50px;top:517.32px;font-size:8.6px;line-height:8.6px;color:#000;white-space:pre;transform:scaleX(0.8800);transform-origin:0 0;">7</div>
<div style="position:absolute;left:96.50px;top:517.32px;font-size:8.6px;line-height:8.6px;color:#000;white-space:pre;transform:scaleX(0.8150);transform-origin:0 0;">ME Inj. Time Too Long (ID 88)</div>
<div style="position:absolute;left:478.20px;top:517.32px;font-size:8.6px;line-height:8.6px;color:#000;white-space:pre;transform:scaleX(0.8580);transform-origin:0 0;">2/10/2023  5:09:26 am -----</div>
<div style="position:absolute;left:569.60px;top:517.32px;font-size:8.6px;line-height:8.6px;color:#000;white-space:pre;transform:scaleX(0.8580);transform-origin:0 0;">2/10/2023  5:16:42 am.</div>
<div style="position:absolute;left:3.50px;top:526.00px;width:24.50px;height:10.00px;box-sizing:border-box;border-bottom:1px solid #6e6e6e;border-right:1px solid #6e6e6e;background:#f0f0f0;box-shadow:inset 1px 1px 0 #fff;"></div>
<div style="position:absolute;left:31.00px;top:526.00px;width:44.60px;height:9.40px;background:#ffff00;"></div>
<div style="position:absolute;left:75.60px;top:526.00px;width:401.00px;height:9.40px;background:#fff;"></div>
<div style="position:absolute;left:476.60px;top:526.00px;width:170.40px;height:9.40px;background:#ffff00;"></div>
<div style="position:absolute;left:31.00px;top:535.40px;width:616.00px;height:0.80px;background:#b4b4b4;"></div>
<div style="position:absolute;left:32.30px;top:527.32px;font-size:8.6px;line-height:8.6px;color:#000;white-space:pre;transform:scaleX(0.7926);transform-origin:0 0;">Common Fail</div>
<div style="position:absolute;left:77.50px;top:527.32px;font-size:8.6px;line-height:8.6px;color:#000;white-space:pre;transform:scaleX(0.8800);transform-origin:0 0;">7</div>
<div style="position:absolute;left:96.50px;top:527.32px;font-size:8.6px;line-height:8.6px;color:#000;white-space:pre;transform:scaleX(0.8188);transform-origin:0 0;">ME Injection Timing Failure Cylinder #7 (ID 89)</div>
<div style="position:absolute;left:478.20px;top:527.32px;font-size:8.6px;line-height:8.6px;color:#000;white-space:pre;transform:scaleX(0.8580);transform-origin:0 0;">2/10/2023  5:06:38 am.396</div>
<div style="position:absolute;left:569.60px;top:527.32px;font-size:8.6px;line-height:8.6px;color:#000;white-space:pre;transform:scaleX(0.8580);transform-origin:0 0;">2/10/2023  5:08:25 am.</div>
<div style="position:absolute;left:3.50px;top:536.00px;width:24.50px;height:10.00px;box-sizing:border-box;border-bottom:1px solid #6e6e6e;border-right:1px solid #6e6e6e;background:#f0f0f0;box-shadow:inset 1px 1px 0 #fff;"></div>
<div style="position:absolute;left:31.00px;top:536.00px;width:44.60px;height:9.40px;background:#00ffff;"></div>
<div style="position:absolute;left:75.60px;top:536.00px;width:401.00px;height:9.40px;background:#fff;"></div>
<div style="position:absolute;left:476.60px;top:536.00px;width:170.40px;height:9.40px;background:#00ffff;"></div>
<div style="position:absolute;left:31.00px;top:545.40px;width:616.00px;height:0.80px;background:#b4b4b4;"></div>
<div style="position:absolute;left:32.30px;top:537.32px;font-size:8.6px;line-height:8.6px;color:#000;white-space:pre;transform:scaleX(0.8400);transform-origin:0 0;">Message</div>
<div style="position:absolute;left:77.50px;top:537.32px;font-size:8.6px;line-height:8.6px;color:#000;white-space:pre;transform:scaleX(0.8800);transform-origin:0 0;">7</div>
<div style="position:absolute;left:96.50px;top:537.32px;font-size:8.6px;line-height:8.6px;color:#000;white-space:pre;transform:scaleX(0.8150);transform-origin:0 0;">ME Inj. Time Too Long (ID 88)</div>
<div style="position:absolute;left:478.20px;top:537.32px;font-size:8.6px;line-height:8.6px;color:#000;white-space:pre;transform:scaleX(0.8580);transform-origin:0 0;">2/10/2023  5:06:38 am -----</div>
<div style="position:absolute;left:569.60px;top:537.32px;font-size:8.6px;line-height:8.6px;color:#000;white-space:pre;transform:scaleX(0.8580);transform-origin:0 0;">2/10/2023  5:08:25 am.</div>
<div style="position:absolute;left:3.50px;top:546.00px;width:24.50px;height:10.00px;box-sizing:border-box;border-bottom:1px solid #6e6e6e;border-right:1px solid #6e6e6e;background:#f0f0f0;box-shadow:inset 1px 1px 0 #fff;"></div>
<div style="position:absolute;left:31.00px;top:546.00px;width:44.60px;height:9.40px;background:#ffff00;"></div>
<div style="position:absolute;left:75.60px;top:546.00px;width:401.00px;height:9.40px;background:#fff;"></div>
<div style="position:absolute;left:476.60px;top:546.00px;width:170.40px;height:9.40px;background:#ffff00;"></div>
<div style="position:absolute;left:31.00px;top:555.40px;width:616.00px;height:0.80px;background:#b4b4b4;"></div>
<div style="position:absolute;left:32.30px;top:547.32px;font-size:8.6px;line-height:8.6px;color:#000;white-space:pre;transform:scaleX(0.7926);transform-origin:0 0;">Common Fail</div>
<div style="position:absolute;left:77.50px;top:547.32px;font-size:8.6px;line-height:8.6px;color:#000;white-space:pre;transform:scaleX(0.8800);transform-origin:0 0;">7</div>
<div style="position:absolute;left:96.50px;top:547.32px;font-size:8.6px;line-height:8.6px;color:#000;white-space:pre;transform:scaleX(0.8188);transform-origin:0 0;">ME Injection Timing Failure Cylinder #7 (ID 89)</div>
<div style="position:absolute;left:478.20px;top:547.32px;font-size:8.6px;line-height:8.6px;color:#000;white-space:pre;transform:scaleX(0.8580);transform-origin:0 0;">2/10/2023  5:03:51 am.684</div>
<div style="position:absolute;left:569.60px;top:547.32px;font-size:8.6px;line-height:8.6px;color:#000;white-space:pre;transform:scaleX(0.8580);transform-origin:0 0;">2/10/2023  5:05:37 am.</div>
<div style="position:absolute;left:3.50px;top:556.00px;width:24.50px;height:10.00px;box-sizing:border-box;border-bottom:1px solid #6e6e6e;border-right:1px solid #6e6e6e;background:#f0f0f0;box-shadow:inset 1px 1px 0 #fff;"></div>
<div style="position:absolute;left:31.00px;top:556.00px;width:44.60px;height:9.40px;background:#00ffff;"></div>
<div style="position:absolute;left:75.60px;top:556.00px;width:401.00px;height:9.40px;background:#fff;"></div>
<div style="position:absolute;left:476.60px;top:556.00px;width:170.40px;height:9.40px;background:#00ffff;"></div>
<div style="position:absolute;left:31.00px;top:565.40px;width:616.00px;height:0.80px;background:#b4b4b4;"></div>
<div style="position:absolute;left:32.30px;top:557.32px;font-size:8.6px;line-height:8.6px;color:#000;white-space:pre;transform:scaleX(0.8400);transform-origin:0 0;">Message</div>
<div style="position:absolute;left:77.50px;top:557.32px;font-size:8.6px;line-height:8.6px;color:#000;white-space:pre;transform:scaleX(0.8800);transform-origin:0 0;">7</div>
<div style="position:absolute;left:96.50px;top:557.32px;font-size:8.6px;line-height:8.6px;color:#000;white-space:pre;transform:scaleX(0.8150);transform-origin:0 0;">ME Inj. Time Too Long (ID 88)</div>
<div style="position:absolute;left:478.20px;top:557.32px;font-size:8.6px;line-height:8.6px;color:#000;white-space:pre;transform:scaleX(0.8580);transform-origin:0 0;">2/10/2023  5:03:51 am -----</div>
<div style="position:absolute;left:569.60px;top:557.32px;font-size:8.6px;line-height:8.6px;color:#000;white-space:pre;transform:scaleX(0.8580);transform-origin:0 0;">2/10/2023  5:05:37 am.</div>
<div style="position:absolute;left:3.50px;top:566.00px;width:24.50px;height:10.00px;box-sizing:border-box;border-bottom:1px solid #6e6e6e;border-right:1px solid #6e6e6e;background:#f0f0f0;box-shadow:inset 1px 1px 0 #fff;"></div>
<div style="position:absolute;left:31.00px;top:566.00px;width:44.60px;height:9.40px;background:#00ff00;"></div>
<div style="position:absolute;left:75.60px;top:566.00px;width:401.00px;height:9.40px;background:#fff;"></div>
<div style="position:absolute;left:476.60px;top:566.00px;width:170.40px;height:9.40px;background:#fff;"></div>
<div style="position:absolute;left:31.00px;top:575.40px;width:616.00px;height:0.80px;background:#b4b4b4;"></div>
<div style="position:absolute;left:32.30px;top:567.32px;font-size:8.6px;line-height:8.6px;color:#000;white-space:pre;transform:scaleX(0.8400);transform-origin:0 0;">Event</div>
<div style="position:absolute;left:77.50px;top:567.32px;font-size:8.6px;line-height:8.6px;color:#000;white-space:pre;transform:scaleX(0.8800);transform-origin:0 0;">1/2</div>
<div style="position:absolute;left:96.50px;top:567.83px;font-size:8px;line-height:8px;font-weight:bold;color:#000;white-space:pre;transform:scaleX(0.9900);transform-origin:0 0;">Ahead RC</div>
<div style="position:absolute;left:478.20px;top:567.32px;font-size:8.6px;line-height:8.6px;color:#000;white-space:pre;transform:scaleX(0.8580);transform-origin:0 0;">29/9/2023  11:32:04 am ----</div>
<div style="position:absolute;left:569.60px;top:567.32px;font-size:8.6px;line-height:8.6px;color:#000;white-space:pre;transform:scaleX(0.8580);transform-origin:0 0;">2/10/2023  5:30:55 am</div>
<div style="position:absolute;left:75.10px;top:315.20px;width:1.00px;height:260.80px;background:#8a8a8a;"></div>
<div style="position:absolute;left:95.00px;top:315.20px;width:1.00px;height:260.80px;background:#8a8a8a;"></div>
<div style="position:absolute;left:476.10px;top:315.20px;width:1.00px;height:260.80px;background:#8a8a8a;"></div>
<div style="position:absolute;left:567.20px;top:315.20px;width:1.00px;height:260.80px;background:#8a8a8a;"></div>
<div style="position:absolute;left:28.00px;top:315.20px;width:1.00px;height:260.80px;background:#444;"></div>
<div style="position:absolute;left:3.00px;top:315.20px;width:1.20px;height:260.80px;background:#6a6a6a;"></div>
<div style="position:absolute;left:30.00px;top:315.20px;width:1.00px;height:260.80px;background:#444;"></div>
<div style="position:absolute;left:647.00px;top:315.20px;width:10.80px;height:260.80px;background:#f8f8f8;"></div>
<div style="position:absolute;left:647.00px;top:316.00px;width:10.80px;height:10.60px;box-sizing:border-box;border-right:1px solid #9a9a9a;border-bottom:1px solid #9a9a9a;background:#f4f4f4;box-shadow:inset 1px 1px 0 #fff;"></div>
<svg style="position:absolute;left:649px;top:318px" width="7" height="6"><path d="M1 4.5 L3.5 1.5 L6 4.5 Z" fill="#000"/></svg>
<div style="position:absolute;left:647.00px;top:326.60px;width:10.80px;height:5.60px;box-sizing:border-box;border-right:1px solid #9a9a9a;border-bottom:1px solid #9a9a9a;background:#f4f4f4;box-shadow:inset 1px 1px 0 #fff;"></div>
<div style="position:absolute;left:647.00px;top:565.50px;width:10.80px;height:10.50px;box-sizing:border-box;border-right:1px solid #9a9a9a;border-bottom:1px solid #9a9a9a;background:#f4f4f4;box-shadow:inset 1px 1px 0 #fff;"></div>
<svg style="position:absolute;left:649px;top:568px" width="7" height="6"><path d="M1 1.5 L3.5 4.5 L6 1.5 Z" fill="#000"/></svg>
<div style="position:absolute;left:0.00px;top:575.00px;width:32.00px;height:1.00px;background:#333;"></div>
<div style="position:absolute;left:261.00px;top:575.00px;width:763.00px;height:1.00px;background:#222;"></div>
<div style="position:absolute;left:1021.50px;top:29.00px;width:1.50px;height:6.50px;background:#22cc22;"></div>
<div style="position:absolute;left:610.30px;top:4.70px;width:411.70px;height:303.60px;box-sizing:border-box;border:1px solid #9a9a9a;background:#f0f0f0;box-shadow:0 3px 9px rgba(0,0,0,0.33);"></div>
<div style="position:absolute;left:611.30px;top:5.70px;width:409.70px;height:19.60px;background:#fff;"></div>
<svg style="position:absolute;left:612px;top:6px" width="20" height="16"><path d="M6.4 11.6 L6.3 6.2 C6.4 4.3 8.6 3.6 9.6 5.4 L12.2 12.6 L14.6 6.3 M5.1 8.3 H8.4" stroke="#f00" stroke-width="1.45" fill="none" stroke-linecap="round" stroke-linejoin="round"/></svg>
<div class="n" style="position:absolute;left:630.00px;top:10.97px;font-size:8.3px;line-height:8.3px;color:#222;white-space:pre;transform:scaleX(0.9597);transform-origin:0 0;">Injection Graph</div>
<div style="position:absolute;left:939.00px;top:15.00px;width:6.50px;height:1.00px;background:#444;"></div>
<div style="position:absolute;left:970.00px;top:12.00px;width:7.20px;height:7.00px;box-sizing:border-box;border:1px solid #444;"></div>
<svg style="position:absolute;left:1000px;top:11px" width="10" height="10"><path d="M1.3 1.3 L8.3 8.3 M8.3 1.3 L1.3 8.3" stroke="#333" stroke-width="1" fill="none"/></svg>
<div class="n" style="position:absolute;left:618.60px;top:33.57px;font-size:8.3px;line-height:8.3px;color:#333;white-space:pre;transform:scaleX(0.9240);transform-origin:0 0;">mA</div>
<div style="position:absolute;left:667.00px;top:32.51px;font-size:10.5px;line-height:10.5px;font-weight:bold;color:#111;white-space:pre;">Injection Graph</div>
<div style="position:absolute;left:771.80px;top:32.51px;font-size:10.5px;line-height:10.5px;font-weight:bold;color:#111;white-space:pre;transform:scaleX(1.0085);transform-origin:0 0;">2/10/2023 6:25:26 am</div>
<div style="position:absolute;left:915.50px;top:32.00px;width:8.30px;height:8.30px;box-sizing:border-box;border:1px solid #c8c8c8;background:#f4f4f4;"></div>
<div class="n" style="position:absolute;left:929.00px;top:32.27px;font-size:8.3px;line-height:8.3px;color:#555;white-space:pre;transform:scaleX(0.8505);transform-origin:0 0;">Scanning On</div>
<div class="n" style="position:absolute;left:976.00px;top:39.47px;font-size:8.3px;line-height:8.3px;color:#333;white-space:pre;transform:scaleX(0.8674);transform-origin:0 0;">Show All</div>
<div style="position:absolute;left:1006.80px;top:39.80px;width:7.80px;height:7.80px;box-sizing:border-box;border-top:1px solid #8a8a8a;border-left:1px solid #8a8a8a;border-right:1px solid #e4e4e4;border-bottom:1px solid #e4e4e4;box-shadow:inset 1px 1px 0 #b8b8b8;background:#fff;"></div>
<svg style="position:absolute;left:1006.80px;top:39.80px" width="7.8" height="7.8"><path d="M1.5 3.6 L3.0 5.4 L6.0 1.5" stroke="#000" stroke-width="1.6" fill="none"/></svg>
<svg style="position:absolute;left:0;top:0" width="1024" height="576"><line x1="637.7" y1="221.25" x2="926.4" y2="221.25" stroke="#9a9a9a" stroke-width="1" stroke-dasharray="1.2 3.1"/><line x1="637.7" y1="201.41" x2="926.4" y2="201.41" stroke="#9a9a9a" stroke-width="1" stroke-dasharray="1.2 3.1"/><line x1="637.7" y1="181.57" x2="926.4" y2="181.57" stroke="#9a9a9a" stroke-width="1" stroke-dasharray="1.2 3.1"/><line x1="637.7" y1="161.73" x2="926.4" y2="161.73" stroke="#9a9a9a" stroke-width="1" stroke-dasharray="1.2 3.1"/><line x1="637.7" y1="141.89" x2="926.4" y2="141.89" stroke="#9a9a9a" stroke-width="1" stroke-dasharray="1.2 3.1"/><line x1="637.7" y1="122.05" x2="926.4" y2="122.05" stroke="#9a9a9a" stroke-width="1" stroke-dasharray="1.2 3.1"/><line x1="637.7" y1="102.21" x2="926.4" y2="102.21" stroke="#9a9a9a" stroke-width="1" stroke-dasharray="1.2 3.1"/><line x1="637.7" y1="82.37" x2="926.4" y2="82.37" stroke="#9a9a9a" stroke-width="1" stroke-dasharray="1.2 3.1"/><line x1="637.7" y1="62.53" x2="926.4" y2="62.53" stroke="#9a9a9a" stroke-width="1" stroke-dasharray="1.2 3.1"/><line x1="694.59" y1="52.2" x2="694.59" y2="231.7" stroke="#9a9a9a" stroke-width="1" stroke-dasharray="1.2 3.1"/><line x1="752.48" y1="52.2" x2="752.48" y2="231.7" stroke="#9a9a9a" stroke-width="1" stroke-dasharray="1.2 3.1"/><line x1="810.36" y1="52.2" x2="810.36" y2="231.7" stroke="#9a9a9a" stroke-width="1" stroke-dasharray="1.2 3.1"/><line x1="868.25" y1="52.2" x2="868.25" y2="231.7" stroke="#9a9a9a" stroke-width="1" stroke-dasharray="1.2 3.1"/><line x1="677.22" y1="52.2" x2="677.22" y2="231.7" stroke="#2020ff" stroke-width="1.1" stroke-dasharray="3 2.2"/><line x1="697.37" y1="52.2" x2="697.37" y2="231.7" stroke="#2020ff" stroke-width="1.1" stroke-dasharray="3 2.2"/><line x1="636.7" y1="155.78" x2="926.4" y2="155.78" stroke="#3a3aff" stroke-width="1.1" stroke-dasharray="3 2.2"/><line x1="636.7" y1="215.30" x2="926.4" y2="215.30" stroke="#3a3aff" stroke-width="1.1" stroke-dasharray="3 2.2"/></svg>
<svg style="position:absolute;left:0;top:0" width="1024" height="576"><path d="M637.00,212.30 C645.33,212.30 678.08,212.47 687.00,212.30 C695.92,212.13 689.42,212.18 690.50,211.30 C691.58,210.42 692.42,209.05 693.50,207.00 C694.58,204.95 695.45,202.75 697.00,199.00 C698.55,195.25 700.53,189.17 702.80,184.50 C705.07,179.83 708.40,174.50 710.60,171.00 C712.80,167.50 714.02,166.13 716.00,163.50 C717.98,160.87 720.00,155.76 722.50,155.20 C725.00,154.64 728.19,159.65 731.02,160.12 C733.86,160.60 736.87,157.86 739.50,158.06 C742.14,158.25 744.42,160.94 746.83,161.30 C749.24,161.66 751.38,159.93 753.96,160.23 C756.54,160.53 759.54,162.70 762.29,163.11 C765.05,163.51 767.97,162.35 770.51,162.66 C773.06,162.96 775.14,164.60 777.56,164.95 C779.98,165.29 782.36,164.41 785.02,164.73 C787.69,165.06 790.82,166.54 793.55,166.92 C796.28,167.30 798.92,166.73 801.38,167.04 C803.85,167.35 805.87,168.43 808.34,168.77 C810.81,169.12 813.47,168.75 816.21,169.10 C818.94,169.45 822.07,170.49 824.72,170.86 C827.38,171.22 829.74,170.98 832.16,171.29 C834.57,171.61 836.67,172.39 839.22,172.73 C841.77,173.07 844.70,172.98 847.46,173.34 C850.22,173.71 853.20,174.58 855.77,174.92 C858.34,175.27 860.47,175.07 862.88,175.39 C865.30,175.71 867.60,176.49 870.24,176.84 C872.88,177.19 875.99,177.13 878.73,177.49 C881.47,177.85 884.20,178.69 886.68,179.02 C889.17,179.35 891.19,179.14 893.64,179.47 C896.09,179.79 898.68,180.62 901.39,180.98 C904.11,181.34 907.25,181.27 909.93,181.63 C912.62,181.98 915.05,182.79 917.48,183.11 C919.91,183.43 923.04,183.41 924.49,183.56 C925.94,183.71 925.91,183.93 926.20,184.00" fill="none" stroke="#008000" stroke-width="0.85" stroke-opacity="0.9" stroke-linejoin="round"/><path d="M637.00,217.50 C642.67,217.50 664.50,217.75 671.00,217.50 C677.50,217.25 674.33,216.67 676.00,216.00 C677.67,215.33 679.58,214.33 681.00,213.50 C682.42,212.67 682.83,213.30 684.50,211.00 C686.17,208.70 688.60,204.12 691.00,199.70 C693.40,195.28 696.07,189.50 698.90,184.50 C701.73,179.50 705.40,173.65 708.00,169.70 C710.60,165.75 712.67,163.05 714.50,160.80 C716.33,158.55 716.83,156.14 719.00,156.20 C721.17,156.26 724.68,160.68 727.52,161.16 C730.37,161.64 733.34,158.89 736.06,159.10 C738.78,159.31 741.39,162.02 743.85,162.39 C746.30,162.76 748.32,161.03 750.80,161.32 C753.28,161.61 755.98,163.73 758.72,164.14 C761.46,164.54 764.58,163.40 767.22,163.72 C769.87,164.04 772.20,165.71 774.61,166.05 C777.02,166.40 779.14,165.48 781.70,165.80 C784.26,166.11 787.23,167.56 789.99,167.95 C792.75,168.34 795.70,167.81 798.26,168.13 C800.81,168.45 802.92,169.54 805.34,169.87 C807.75,170.21 810.09,169.80 812.74,170.14 C815.39,170.48 818.51,171.52 821.25,171.90 C823.98,172.27 826.67,172.08 829.15,172.40 C831.63,172.72 833.64,173.49 836.10,173.81 C838.56,174.14 841.18,174.01 843.91,174.37 C846.63,174.73 849.77,175.63 852.44,175.98 C855.11,176.34 857.51,176.17 859.93,176.50 C862.35,176.82 864.43,177.57 866.97,177.91 C869.50,178.25 872.40,178.15 875.16,178.52 C877.91,178.88 880.93,179.76 883.51,180.10 C886.10,180.45 888.26,180.25 890.66,180.57 C893.07,180.89 895.34,181.67 897.96,182.02 C900.59,182.37 903.68,182.30 906.43,182.66 C909.17,183.03 911.95,183.88 914.44,184.21 C916.94,184.54 919.45,184.44 921.41,184.65 C923.37,184.87 925.40,185.36 926.20,185.50" fill="none" stroke="#ff00ff" stroke-width="0.85" stroke-opacity="0.9" stroke-linejoin="round"/><path d="M637.00,215.00 C643.17,215.00 667.17,215.67 674.00,215.00 C680.83,214.33 675.83,214.00 678.00,211.00 C680.17,208.00 684.00,202.25 687.00,197.00 C690.00,191.75 693.17,185.17 696.00,179.50 C698.83,173.83 701.50,167.22 704.00,163.00 C706.50,158.78 708.41,154.92 711.00,154.20 C713.59,153.48 716.72,158.23 719.52,158.69 C722.33,159.14 725.09,156.60 727.85,156.92 C730.61,157.24 733.53,160.12 736.08,160.60 C738.62,161.08 740.71,159.44 743.13,159.82 C745.55,160.20 747.92,162.37 750.58,162.87 C753.24,163.36 756.38,162.35 759.11,162.79 C761.83,163.22 764.49,165.03 766.96,165.48 C769.42,165.93 771.44,165.09 773.91,165.49 C776.37,165.89 779.03,167.40 781.76,167.89 C784.49,168.38 787.62,168.00 790.28,168.44 C792.95,168.88 795.31,170.09 797.73,170.52 C800.15,170.95 802.24,170.60 804.78,171.02 C807.33,171.45 810.26,172.58 813.02,173.07 C815.78,173.55 818.77,173.52 821.34,173.95 C823.91,174.38 826.05,175.25 828.46,175.67 C830.87,176.09 833.16,176.00 835.80,176.45 C838.44,176.90 841.54,177.92 844.29,178.39 C847.03,178.86 849.77,178.85 852.25,179.28 C854.74,179.71 856.76,180.54 859.21,180.96 C861.66,181.38 864.24,181.34 866.95,181.81 C869.66,182.27 872.81,183.29 875.49,183.76 C878.18,184.22 880.62,184.16 883.05,184.58 C885.48,184.99 887.53,185.83 890.06,186.26 C892.58,186.69 895.44,186.70 898.19,187.18 C900.95,187.65 903.99,188.66 906.59,189.10 C909.19,189.55 911.38,189.45 913.79,189.86 C916.19,190.27 918.96,191.20 921.03,191.59 C923.10,191.98 925.34,192.10 926.20,192.20" fill="none" stroke="#f0f000" stroke-width="0.85" stroke-opacity="0.9" stroke-linejoin="round"/><path d="M637.00,216.00 C641.17,216.00 656.83,216.42 662.00,216.00 C667.17,215.58 666.17,214.50 668.00,213.50 C669.83,212.50 671.50,211.75 673.00,210.00 C674.50,208.25 675.50,206.33 677.00,203.00 C678.50,199.67 680.25,194.50 682.00,190.00 C683.75,185.50 685.50,180.00 687.50,176.00 C689.50,172.00 691.92,168.83 694.00,166.00 C696.08,163.17 698.10,160.77 700.00,159.00 C701.90,157.23 703.08,155.51 705.40,155.40 C707.72,155.29 711.19,158.21 713.92,158.35 C716.66,158.48 719.10,155.89 721.83,156.20 C724.57,156.52 727.69,159.73 730.34,160.25 C732.99,160.76 735.32,158.92 737.74,159.30 C740.15,159.68 742.26,162.04 744.82,162.53 C747.38,163.01 750.34,161.78 753.10,162.23 C755.86,162.67 758.82,164.72 761.38,165.20 C763.94,165.68 766.05,164.71 768.46,165.10 C770.88,165.50 773.21,167.09 775.86,167.58 C778.50,168.07 781.62,167.57 784.36,168.03 C787.10,168.49 789.80,169.87 792.28,170.32 C794.75,170.77 796.77,170.32 799.23,170.74 C801.68,171.15 804.30,172.32 807.02,172.81 C809.74,173.30 812.88,173.23 815.56,173.69 C818.23,174.14 820.64,175.13 823.06,175.56 C825.48,175.98 827.55,175.80 830.09,176.25 C832.62,176.69 835.51,177.73 838.27,178.22 C841.02,178.70 844.04,178.69 846.63,179.14 C849.22,179.59 851.38,180.51 853.79,180.93 C856.20,181.36 858.46,181.21 861.08,181.67 C863.71,182.13 866.79,183.21 869.54,183.69 C872.29,184.17 875.07,184.12 877.57,184.55 C880.07,184.99 882.10,185.89 884.54,186.31 C886.98,186.74 889.51,186.64 892.21,187.12 C894.91,187.59 898.06,188.68 900.76,189.15 C903.45,189.62 905.95,189.52 908.38,189.95 C910.82,190.37 912.86,191.27 915.37,191.71 C917.88,192.15 921.63,192.32 923.44,192.58 C925.25,192.85 925.74,193.18 926.20,193.30" fill="none" stroke="#00e000" stroke-width="0.85" stroke-opacity="0.9" stroke-linejoin="round"/><path d="M637.00,218.00 C642.83,218.00 665.58,218.50 672.00,218.00 C678.42,217.50 674.25,217.83 675.50,215.00 C676.75,212.17 678.17,205.33 679.50,201.00 C680.83,196.67 681.87,193.17 683.50,189.00 C685.13,184.83 687.47,179.83 689.30,176.00 C691.13,172.17 692.72,168.75 694.50,166.00 C696.28,163.25 698.25,161.17 700.00,159.50 C701.75,157.83 702.75,155.83 705.00,156.00 C707.25,156.17 710.70,160.27 713.52,160.55 C716.35,160.82 719.20,157.40 721.95,157.64 C724.70,157.87 727.53,161.52 730.04,161.96 C732.55,162.39 734.60,159.95 737.03,160.26 C739.46,160.57 741.94,163.37 744.63,163.82 C747.33,164.28 750.48,162.62 753.18,162.98 C755.89,163.34 758.43,165.58 760.87,165.98 C763.31,166.38 765.34,165.04 767.84,165.38 C770.33,165.73 773.10,167.59 775.85,168.03 C778.60,168.47 781.69,167.67 784.32,168.03 C786.94,168.40 789.21,169.85 791.62,170.23 C794.03,170.61 796.19,169.95 798.77,170.32 C801.35,170.69 804.36,172.00 807.12,172.43 C809.88,172.86 812.78,172.54 815.32,172.90 C817.85,173.27 819.93,174.27 822.35,174.64 C824.77,175.00 827.17,174.70 829.84,175.09 C832.51,175.49 835.65,176.62 838.37,177.03 C841.10,177.44 843.72,177.17 846.18,177.54 C848.64,177.91 850.66,178.87 853.13,179.24 C855.61,179.61 858.29,179.35 861.03,179.76 C863.76,180.17 866.89,181.29 869.54,181.69 C872.19,182.09 874.53,181.78 876.95,182.14 C879.36,182.50 881.47,183.47 884.02,183.86 C886.58,184.24 889.53,184.02 892.29,184.43 C895.05,184.84 898.02,185.95 900.58,186.33 C903.14,186.71 905.26,186.37 907.68,186.73 C910.09,187.09 912.41,188.10 915.05,188.49 C917.70,188.89 921.70,188.89 923.56,189.10 C925.41,189.32 925.76,189.68 926.20,189.80" fill="none" stroke="#0000ff" stroke-width="0.85" stroke-opacity="0.9" stroke-linejoin="round"/><path d="M637.00,216.50 C642.83,216.50 665.67,217.00 672.00,216.50 C678.33,216.00 673.78,216.25 675.00,213.50 C676.22,210.75 677.93,204.25 679.30,200.00 C680.67,195.75 681.58,192.17 683.20,188.00 C684.82,183.83 687.15,178.83 689.00,175.00 C690.85,171.17 692.47,167.83 694.30,165.00 C696.13,162.17 698.05,159.78 700.00,158.00 C701.95,156.22 703.58,154.22 706.00,154.30 C708.42,154.38 711.74,158.17 714.52,158.47 C717.31,158.77 719.97,155.88 722.73,156.11 C725.48,156.33 728.49,159.42 731.07,159.84 C733.66,160.26 735.81,158.31 738.22,158.61 C740.63,158.91 742.90,161.22 745.53,161.63 C748.16,162.05 751.25,160.74 754.00,161.09 C756.74,161.45 759.51,163.36 762.00,163.75 C764.50,164.13 766.52,163.08 768.97,163.40 C771.41,163.72 773.96,165.26 776.66,165.67 C779.37,166.08 782.52,165.49 785.21,165.85 C787.90,166.21 790.38,167.47 792.81,167.83 C795.24,168.19 797.29,167.68 799.80,168.02 C802.32,168.36 805.15,169.47 807.90,169.88 C810.65,170.28 813.71,170.10 816.32,170.46 C818.93,170.82 821.14,171.69 823.55,172.04 C825.95,172.38 828.16,172.15 830.76,172.52 C833.37,172.89 836.42,173.86 839.17,174.25 C841.92,174.65 844.77,174.51 847.29,174.87 C849.80,175.22 851.85,176.05 854.28,176.40 C856.71,176.74 859.17,176.55 861.86,176.93 C864.55,177.31 867.70,178.30 870.41,178.69 C873.12,179.07 875.68,178.89 878.12,179.24 C880.57,179.59 882.60,180.41 885.09,180.77 C887.58,181.12 890.33,180.97 893.07,181.36 C895.82,181.75 898.92,182.73 901.55,183.10 C904.18,183.48 906.47,183.26 908.88,183.60 C911.29,183.94 913.43,184.79 916.01,185.15 C918.59,185.52 922.64,185.60 924.34,185.79 C926.04,185.99 925.89,186.22 926.20,186.30" fill="none" stroke="#ff0000" stroke-width="0.85" stroke-opacity="0.9" stroke-linejoin="round"/><path d="M637.00,211.30 C643.00,211.30 666.50,211.68 673.00,211.30 C679.50,210.92 674.83,211.05 676.00,209.00 C677.17,206.95 678.67,202.58 680.00,199.00 C681.33,195.42 682.42,191.67 684.00,187.50 C685.58,183.33 687.67,178.00 689.50,174.00 C691.33,170.00 693.08,166.50 695.00,163.50 C696.92,160.50 698.60,158.03 701.00,156.00 C703.40,153.97 706.58,151.31 709.40,151.30 C712.22,151.29 715.17,155.54 717.92,155.93 C720.68,156.32 723.17,153.44 725.91,153.65 C728.66,153.87 731.75,156.81 734.39,157.22 C737.02,157.63 739.31,155.82 741.71,156.10 C744.12,156.39 746.27,158.56 748.85,158.95 C751.42,159.34 754.42,158.10 757.18,158.44 C759.94,158.78 762.85,160.62 765.40,160.99 C767.94,161.37 770.03,160.38 772.44,160.69 C774.86,160.99 777.24,162.44 779.91,162.82 C782.57,163.21 785.71,162.65 788.44,163.00 C791.16,163.36 793.81,164.58 796.27,164.93 C798.74,165.28 800.75,164.80 803.22,165.12 C805.69,165.44 808.36,166.47 811.09,166.86 C813.82,167.25 816.95,167.08 819.61,167.44 C822.27,167.79 824.63,168.64 827.04,168.97 C829.46,169.31 831.55,169.08 834.11,169.43 C836.66,169.77 839.59,170.68 842.35,171.06 C845.11,171.44 848.09,171.33 850.66,171.68 C853.23,172.03 855.36,172.83 857.77,173.16 C860.18,173.49 862.48,173.29 865.13,173.65 C867.77,174.01 870.88,174.95 873.62,175.32 C876.36,175.69 879.09,175.55 881.57,175.89 C884.06,176.23 886.08,177.02 888.53,177.35 C890.98,177.68 893.56,177.53 896.28,177.90 C898.99,178.27 902.14,179.20 904.82,179.57 C907.50,179.94 909.94,179.76 912.37,180.09 C914.79,180.42 917.07,181.20 919.38,181.55 C921.68,181.90 925.06,182.09 926.20,182.20" fill="none" stroke="#800080" stroke-width="0.85" stroke-opacity="0.9" stroke-linejoin="round"/></svg>
<div style="position:absolute;left:636.40px;top:52.20px;width:290.50px;height:1.00px;background:#333;"></div>
<div style="position:absolute;left:925.90px;top:52.20px;width:1.00px;height:179.50px;background:#333;"></div>
<div style="position:absolute;left:636.20px;top:52.20px;width:1.30px;height:180.50px;background:#333;"></div>
<div style="position:absolute;left:636.20px;top:231.30px;width:290.70px;height:1.20px;background:#333;"></div>
<svg style="position:absolute;left:0;top:0" width="1024" height="576"><line x1="634.2" y1="231.17" x2="639.2" y2="231.17" stroke="#333" stroke-width="1.1"/><line x1="634.2" y1="221.25" x2="639.2" y2="221.25" stroke="#333" stroke-width="1.1"/><line x1="634.2" y1="211.33" x2="639.2" y2="211.33" stroke="#333" stroke-width="1.1"/><line x1="634.2" y1="201.41" x2="639.2" y2="201.41" stroke="#333" stroke-width="1.1"/><line x1="634.2" y1="191.49" x2="639.2" y2="191.49" stroke="#333" stroke-width="1.1"/><line x1="634.2" y1="181.57" x2="639.2" y2="181.57" stroke="#333" stroke-width="1.1"/><line x1="634.2" y1="171.65" x2="639.2" y2="171.65" stroke="#333" stroke-width="1.1"/><line x1="634.2" y1="161.73" x2="639.2" y2="161.73" stroke="#333" stroke-width="1.1"/><line x1="634.2" y1="151.81" x2="639.2" y2="151.81" stroke="#333" stroke-width="1.1"/><line x1="634.2" y1="141.89" x2="639.2" y2="141.89" stroke="#333" stroke-width="1.1"/><line x1="634.2" y1="131.97" x2="639.2" y2="131.97" stroke="#333" stroke-width="1.1"/><line x1="634.2" y1="122.05" x2="639.2" y2="122.05" stroke="#333" stroke-width="1.1"/><line x1="634.2" y1="112.13" x2="639.2" y2="112.13" stroke="#333" stroke-width="1.1"/><line x1="634.2" y1="102.21" x2="639.2" y2="102.21" stroke="#333" stroke-width="1.1"/><line x1="634.2" y1="92.29" x2="639.2" y2="92.29" stroke="#333" stroke-width="1.1"/><line x1="634.2" y1="82.37" x2="639.2" y2="82.37" stroke="#333" stroke-width="1.1"/><line x1="634.2" y1="72.45" x2="639.2" y2="72.45" stroke="#333" stroke-width="1.1"/><line x1="634.2" y1="62.53" x2="639.2" y2="62.53" stroke="#333" stroke-width="1.1"/><line x1="694.59" y1="229.2" x2="694.59" y2="233.7" stroke="#333" stroke-width="1.1"/><line x1="752.48" y1="229.2" x2="752.48" y2="233.7" stroke="#333" stroke-width="1.1"/><line x1="810.36" y1="229.2" x2="810.36" y2="233.7" stroke="#333" stroke-width="1.1"/><line x1="868.25" y1="229.2" x2="868.25" y2="233.7" stroke="#333" stroke-width="1.1"/></svg>
<div class="n" style="position:absolute;left:628.61px;top:218.10px;font-size:8.8px;line-height:8.8px;color:#222;white-space:pre;transform:scaleX(0.9200);transform-origin:100% 0;">4</div>
<div class="n" style="position:absolute;left:628.61px;top:198.26px;font-size:8.8px;line-height:8.8px;color:#222;white-space:pre;transform:scaleX(0.9200);transform-origin:100% 0;">6</div>
<div class="n" style="position:absolute;left:628.61px;top:178.42px;font-size:8.8px;line-height:8.8px;color:#222;white-space:pre;transform:scaleX(0.9200);transform-origin:100% 0;">8</div>
<div class="n" style="position:absolute;left:623.72px;top:158.58px;font-size:8.8px;line-height:8.8px;color:#222;white-space:pre;transform:scaleX(0.9200);transform-origin:100% 0;">10</div>
<div class="n" style="position:absolute;left:623.72px;top:138.74px;font-size:8.8px;line-height:8.8px;color:#222;white-space:pre;transform:scaleX(0.9200);transform-origin:100% 0;">12</div>
<div class="n" style="position:absolute;left:623.72px;top:118.90px;font-size:8.8px;line-height:8.8px;color:#222;white-space:pre;transform:scaleX(0.9200);transform-origin:100% 0;">14</div>
<div class="n" style="position:absolute;left:623.72px;top:99.06px;font-size:8.8px;line-height:8.8px;color:#222;white-space:pre;transform:scaleX(0.9200);transform-origin:100% 0;">16</div>
<div class="n" style="position:absolute;left:623.72px;top:79.22px;font-size:8.8px;line-height:8.8px;color:#222;white-space:pre;transform:scaleX(0.9200);transform-origin:100% 0;">18</div>
<div class="n" style="position:absolute;left:623.72px;top:59.38px;font-size:8.8px;line-height:8.8px;color:#222;white-space:pre;transform:scaleX(0.9200);transform-origin:100% 0;">20</div>
<div class="n" style="position:absolute;left:634.25px;top:237.75px;font-size:8.8px;line-height:8.8px;color:#222;white-space:pre;transform:scaleX(0.9200);transform-origin:50% 0;">0</div>
<div class="n" style="position:absolute;left:747.58px;top:237.75px;font-size:8.8px;line-height:8.8px;color:#222;white-space:pre;transform:scaleX(0.9200);transform-origin:50% 0;">50</div>
<div class="n" style="position:absolute;left:860.91px;top:237.75px;font-size:8.8px;line-height:8.8px;color:#222;white-space:pre;transform:scaleX(0.9200);transform-origin:50% 0;">100</div>
<div style="position:absolute;left:667.20px;top:88.50px;width:31px;height:9px;transform:rotate(-90deg);transform-origin:0 0;background:#e6e2da;font-size:9px;line-height:9.5px;font-weight:bold;color:#1414ff;white-space:pre;text-align:center;overflow:hidden;"><span style="display:inline-block;transform:scaleX(0.93);">17.5 ms</span></div>
<div style="position:absolute;left:687.40px;top:88.50px;width:31px;height:9px;transform:rotate(-90deg);transform-origin:0 0;background:#e6e2da;font-size:9px;line-height:9.5px;font-weight:bold;color:#1414ff;white-space:pre;text-align:center;overflow:hidden;"><span style="display:inline-block;transform:scaleX(0.93);">26.2 ms</span></div>
<div style="position:absolute;left:888.50px;top:145.00px;width:32.50px;height:9.00px;background:#e6e2da;"></div>
<div style="position:absolute;left:889.50px;top:145.38px;font-size:9px;line-height:9px;font-weight:bold;color:#1414ff;white-space:pre;transform:scaleX(0.8981);transform-origin:0 0;">10.6 mA</div>
<div style="position:absolute;left:893.00px;top:206.50px;width:28.00px;height:8.50px;background:#e6e2da;"></div>
<div style="position:absolute;left:894.20px;top:206.38px;font-size:9px;line-height:9px;font-weight:bold;color:#1414ff;white-space:pre;transform:scaleX(0.8911);transform-origin:0 0;">4.6 mA</div>
<div style="position:absolute;left:939.80px;top:52.70px;width:81.20px;height:80.90px;background:#f0f0f0;"></div>
<div style="position:absolute;left:939.80px;top:52.20px;width:81.20px;height:11.70px;box-sizing:border-box;border:1px solid #777;border-right:none;background:#fff;"></div>
<div style="position:absolute;left:949.90px;top:52.70px;width:1.20px;height:80.90px;background:#8a8a8a;"></div>
<div style="position:absolute;left:964.60px;top:52.70px;width:1.20px;height:80.90px;background:#8a8a8a;"></div>
<div style="position:absolute;left:1000.10px;top:52.70px;width:1.20px;height:80.90px;background:#8a8a8a;"></div>
<div style="position:absolute;left:939.80px;top:52.70px;width:1.00px;height:80.90px;background:#666;"></div>
<div style="position:absolute;left:939.80px;top:63.20px;width:81.20px;height:1.00px;background:#555;"></div>
<div class="n" style="position:absolute;left:941.80px;top:54.60px;font-size:8.5px;line-height:8.5px;color:#222;white-space:pre;transform:scaleX(0.8500);transform-origin:0 0;">C</div>
<div class="n" style="position:absolute;left:952.00px;top:54.60px;font-size:8.5px;line-height:8.5px;color:#222;white-space:pre;transform:scaleX(0.8000);transform-origin:0 0;">Cyl</div>
<div class="n" style="position:absolute;left:966.50px;top:54.60px;font-size:8.5px;line-height:8.5px;color:#222;white-space:pre;transform:scaleX(0.8300);transform-origin:0 0;">Value</div>
<div class="n" style="position:absolute;left:1002.00px;top:54.60px;font-size:8.5px;line-height:8.5px;color:#222;white-space:pre;transform:scaleX(0.8500);transform-origin:0 0;">Show</div>
<div style="position:absolute;left:940.80px;top:64.20px;width:9.20px;height:9.50px;background:#ff0000;"></div>
<div style="position:absolute;left:1001.30px;top:64.00px;width:19.70px;height:9.70px;background:#fff;"></div>
<div style="position:absolute;left:951.00px;top:73.00px;width:70.00px;height:1.00px;background:#c8c8c8;"></div>
<div class="n" style="position:absolute;left:952.80px;top:64.90px;font-size:8.5px;line-height:8.5px;color:#222;white-space:pre;transform:scaleX(0.9000);transform-origin:0 0;">1</div>
<div style="position:absolute;left:1007.20px;top:65.50px;width:7.00px;height:7.00px;box-sizing:border-box;border-top:1px solid #8a8a8a;border-left:1px solid #8a8a8a;border-right:1px solid #e4e4e4;border-bottom:1px solid #e4e4e4;box-shadow:inset 1px 1px 0 #b8b8b8;background:#fff;"></div>
<svg style="position:absolute;left:1007.20px;top:65.50px" width="7" height="7"><path d="M1.5 3.6 L3.0 5.4 L6.0 1.5" stroke="#000" stroke-width="1.6" fill="none"/></svg>
<div style="position:absolute;left:940.80px;top:74.20px;width:9.20px;height:9.50px;background:#0000ff;"></div>
<div style="position:absolute;left:1001.30px;top:74.00px;width:19.70px;height:9.70px;background:#fff;"></div>
<div style="position:absolute;left:951.00px;top:83.00px;width:70.00px;height:1.00px;background:#c8c8c8;"></div>
<div class="n" style="position:absolute;left:952.80px;top:74.90px;font-size:8.5px;line-height:8.5px;color:#222;white-space:pre;transform:scaleX(0.9000);transform-origin:0 0;">2</div>
<div style="position:absolute;left:1007.20px;top:75.50px;width:7.00px;height:7.00px;box-sizing:border-box;border-top:1px solid #8a8a8a;border-left:1px solid #8a8a8a;border-right:1px solid #e4e4e4;border-bottom:1px solid #e4e4e4;box-shadow:inset 1px 1px 0 #b8b8b8;background:#fff;"></div>
<svg style="position:absolute;left:1007.20px;top:75.50px" width="7" height="7"><path d="M1.5 3.6 L3.0 5.4 L6.0 1.5" stroke="#000" stroke-width="1.6" fill="none"/></svg>
<div style="position:absolute;left:940.80px;top:84.20px;width:9.20px;height:9.50px;background:#22ee00;"></div>
<div style="position:absolute;left:1001.30px;top:84.00px;width:19.70px;height:9.70px;background:#fff;"></div>
<div style="position:absolute;left:951.00px;top:93.00px;width:70.00px;height:1.00px;background:#c8c8c8;"></div>
<div class="n" style="position:absolute;left:952.80px;top:84.90px;font-size:8.5px;line-height:8.5px;color:#222;white-space:pre;transform:scaleX(0.9000);transform-origin:0 0;">3</div>
<div style="position:absolute;left:1007.20px;top:85.50px;width:7.00px;height:7.00px;box-sizing:border-box;border-top:1px solid #8a8a8a;border-left:1px solid #8a8a8a;border-right:1px solid #e4e4e4;border-bottom:1px solid #e4e4e4;box-shadow:inset 1px 1px 0 #b8b8b8;background:#fff;"></div>
<svg style="position:absolute;left:1007.20px;top:85.50px" width="7" height="7"><path d="M1.5 3.6 L3.0 5.4 L6.0 1.5" stroke="#000" stroke-width="1.6" fill="none"/></svg>
<div style="position:absolute;left:940.80px;top:94.20px;width:9.20px;height:9.50px;background:#ffff00;"></div>
<div style="position:absolute;left:1001.30px;top:94.00px;width:19.70px;height:9.70px;background:#fff;"></div>
<div style="position:absolute;left:951.00px;top:103.00px;width:70.00px;height:1.00px;background:#c8c8c8;"></div>
<div class="n" style="position:absolute;left:952.80px;top:94.90px;font-size:8.5px;line-height:8.5px;color:#222;white-space:pre;transform:scaleX(0.9000);transform-origin:0 0;">4</div>
<div style="position:absolute;left:1007.20px;top:95.50px;width:7.00px;height:7.00px;box-sizing:border-box;border-top:1px solid #8a8a8a;border-left:1px solid #8a8a8a;border-right:1px solid #e4e4e4;border-bottom:1px solid #e4e4e4;box-shadow:inset 1px 1px 0 #b8b8b8;background:#fff;"></div>
<svg style="position:absolute;left:1007.20px;top:95.50px" width="7" height="7"><path d="M1.5 3.6 L3.0 5.4 L6.0 1.5" stroke="#000" stroke-width="1.6" fill="none"/></svg>
<div style="position:absolute;left:940.80px;top:104.20px;width:9.20px;height:9.50px;background:#800080;"></div>
<div style="position:absolute;left:1001.30px;top:104.00px;width:19.70px;height:9.70px;background:#fff;"></div>
<div style="position:absolute;left:951.00px;top:113.00px;width:70.00px;height:1.00px;background:#c8c8c8;"></div>
<div class="n" style="position:absolute;left:952.80px;top:104.90px;font-size:8.5px;line-height:8.5px;color:#222;white-space:pre;transform:scaleX(0.9000);transform-origin:0 0;">5</div>
<div style="position:absolute;left:1007.20px;top:105.50px;width:7.00px;height:7.00px;box-sizing:border-box;border-top:1px solid #8a8a8a;border-left:1px solid #8a8a8a;border-right:1px solid #e4e4e4;border-bottom:1px solid #e4e4e4;box-shadow:inset 1px 1px 0 #b8b8b8;background:#fff;"></div>
<svg style="position:absolute;left:1007.20px;top:105.50px" width="7" height="7"><path d="M1.5 3.6 L3.0 5.4 L6.0 1.5" stroke="#000" stroke-width="1.6" fill="none"/></svg>
<div style="position:absolute;left:940.80px;top:114.20px;width:9.20px;height:9.50px;background:#ff00ff;"></div>
<div style="position:absolute;left:1001.30px;top:114.00px;width:19.70px;height:9.70px;background:#fff;"></div>
<div style="position:absolute;left:951.00px;top:123.00px;width:70.00px;height:1.00px;background:#c8c8c8;"></div>
<div class="n" style="position:absolute;left:952.80px;top:114.90px;font-size:8.5px;line-height:8.5px;color:#222;white-space:pre;transform:scaleX(0.9000);transform-origin:0 0;">6</div>
<div style="position:absolute;left:1007.20px;top:115.50px;width:7.00px;height:7.00px;box-sizing:border-box;border-top:1px solid #8a8a8a;border-left:1px solid #8a8a8a;border-right:1px solid #e4e4e4;border-bottom:1px solid #e4e4e4;box-shadow:inset 1px 1px 0 #b8b8b8;background:#fff;"></div>
<svg style="position:absolute;left:1007.20px;top:115.50px" width="7" height="7"><path d="M1.5 3.6 L3.0 5.4 L6.0 1.5" stroke="#000" stroke-width="1.6" fill="none"/></svg>
<div style="position:absolute;left:940.80px;top:124.20px;width:9.20px;height:9.50px;background:#008000;"></div>
<div style="position:absolute;left:1001.30px;top:124.00px;width:19.70px;height:9.70px;background:#fff;"></div>
<div style="position:absolute;left:951.00px;top:133.00px;width:70.00px;height:1.00px;background:#c8c8c8;"></div>
<div style="position:absolute;left:952.50px;top:125.20px;width:4.70px;height:7.70px;background:#3c8df0;"></div>
<div class="n" style="position:absolute;left:952.80px;top:124.90px;font-size:8.5px;line-height:8.5px;color:#fff;white-space:pre;transform:scaleX(0.9000);transform-origin:0 0;">7</div>
<div style="position:absolute;left:1007.20px;top:125.50px;width:7.00px;height:7.00px;box-sizing:border-box;border-top:1px solid #8a8a8a;border-left:1px solid #8a8a8a;border-right:1px solid #e4e4e4;border-bottom:1px solid #e4e4e4;box-shadow:inset 1px 1px 0 #b8b8b8;background:#fff;"></div>
<svg style="position:absolute;left:1007.20px;top:125.50px" width="7" height="7"><path d="M1.5 3.6 L3.0 5.4 L6.0 1.5" stroke="#000" stroke-width="1.6" fill="none"/></svg>
<div class="n" style="position:absolute;left:933.70px;top:228.27px;font-size:8.3px;line-height:8.3px;color:#333;white-space:pre;transform:scaleX(0.9494);transform-origin:0 0;">ms</div>
<div style="position:absolute;left:965.70px;top:213.20px;width:13.30px;height:10.80px;box-sizing:border-box;background:#f0f0f0;border-right:1px solid #a0a0a0;border-bottom:1px solid #a0a0a0;box-shadow:inset 1px 1px 0 #fff;"></div>
<div style="position:absolute;left:955.00px;top:224.00px;width:10.70px;height:13.00px;box-sizing:border-box;background:#f0f0f0;border-right:1px solid #a0a0a0;border-bottom:1px solid #a0a0a0;box-shadow:inset 1px 1px 0 #fff;"></div>
<div style="position:absolute;left:979.00px;top:224.00px;width:10.80px;height:13.00px;box-sizing:border-box;background:#f0f0f0;border-right:1px solid #a0a0a0;border-bottom:1px solid #a0a0a0;box-shadow:inset 1px 1px 0 #fff;"></div>
<div style="position:absolute;left:965.70px;top:237.00px;width:13.30px;height:10.80px;box-sizing:border-box;background:#f0f0f0;border-right:1px solid #a0a0a0;border-bottom:1px solid #a0a0a0;box-shadow:inset 1px 1px 0 #fff;"></div>
<div style="position:absolute;left:965.70px;top:224.00px;width:13.30px;height:13.00px;background:#dcd8d0;"></div>
<svg style="position:absolute;left:955px;top:213px" width="36" height="36"><path d="M14.6 6.9 L17 4.3 L19.4 6.9 Z" fill="#111"/><path d="M14.6 28.4 L17 31.0 L19.4 28.4 Z" fill="#111"/><path d="M6.3 15.1 L3.8 17.5 L6.3 19.9 Z" fill="#111"/><path d="M28.5 15.1 L31.0 17.5 L28.5 19.9 Z" fill="#111"/><circle cx="15.8" cy="16.9" r="3.3" fill="#ddd" stroke="#333" stroke-width="1.3"/><path d="M18.3 19.5 L21.2 22.6" stroke="#1a2a88" stroke-width="1.6"/></svg>
<div style="position:absolute;left:615.50px;top:256.85px;font-size:8.8px;line-height:8.8px;color:#111;white-space:pre;transform:scaleX(0.7887);transform-origin:0 0;">Cyclic</div>
<div style="position:absolute;left:638.20px;top:258.00px;width:7.60px;height:7.60px;box-sizing:border-box;border-top:1px solid #8a8a8a;border-left:1px solid #8a8a8a;border-right:1px solid #e4e4e4;border-bottom:1px solid #e4e4e4;box-shadow:inset 1px 1px 0 #b8b8b8;background:#fff;"></div>
<div style="position:absolute;left:653.30px;top:255.40px;width:31.50px;height:13.40px;box-sizing:border-box;background:#f0f0f0;border-right:1px solid #777;border-bottom:1px solid #777;border-top:1px solid #fff;border-left:1px solid #fff;box-shadow:inset -1px -1px 0 #c0c0c0;"></div>
<div style="position:absolute;left:659.02px;top:257.85px;font-size:8.8px;line-height:8.8px;color:#222;white-space:pre;transform:scaleX(0.8000);transform-origin:50% 0;">Scan</div>
<div style="position:absolute;left:690.50px;top:255.40px;width:31.50px;height:13.40px;box-sizing:border-box;background:#f0f0f0;border-right:1px solid #777;border-bottom:1px solid #777;border-top:1px solid #fff;border-left:1px solid #fff;box-shadow:inset -1px -1px 0 #c0c0c0;"></div>
<div style="position:absolute;left:697.20px;top:257.85px;font-size:8.8px;line-height:8.8px;color:#aaa;white-space:pre;transform:scaleX(0.8000);transform-origin:50% 0;">Stop</div>
<div style="position:absolute;left:730.80px;top:256.65px;font-size:8.8px;line-height:8.8px;color:#111;white-space:pre;transform:scaleX(0.8069);transform-origin:0 0;">Indic. Source:</div>
<div style="position:absolute;left:779.20px;top:255.30px;width:47.80px;height:12.70px;box-sizing:border-box;background:#fff;border-top:1px solid #999;border-left:1px solid #999;border-right:1px solid #ddd;border-bottom:1px solid #ddd;"></div>
<div style="position:absolute;left:781.80px;top:257.15px;font-size:8.8px;line-height:8.8px;color:#000;white-space:pre;transform:scaleX(0.8000);transform-origin:0 0;">Cyl 01</div>
<div style="position:absolute;left:815.50px;top:256.30px;width:10.70px;height:10.70px;box-sizing:border-box;background:#f0f0f0;border-right:1px solid #a0a0a0;border-bottom:1px solid #a0a0a0;box-shadow:inset 1px 1px 0 #fff;"></div>
<svg style="position:absolute;left:816px;top:257px" width="10" height="10"><path d="M2.5 4 L5.2 6.8 L7.9 4 Z" fill="#000"/></svg>
<div style="position:absolute;left:888.90px;top:255.20px;width:31.30px;height:13.60px;box-sizing:border-box;background:#f0f0f0;border-right:1px solid #777;border-bottom:1px solid #777;border-top:1px solid #fff;border-left:1px solid #fff;box-shadow:inset -1px -1px 0 #c0c0c0;"></div>
<div style="position:absolute;left:891.84px;top:257.65px;font-size:8.8px;line-height:8.8px;color:#222;white-space:pre;transform:scaleX(0.8000);transform-origin:50% 0;">Export</div>
<div style="position:absolute;left:930.30px;top:256.85px;font-size:8.8px;line-height:8.8px;color:#111;white-space:pre;transform:scaleX(0.8115);transform-origin:0 0;">Hide Labels</div>
<div style="position:absolute;left:971.70px;top:258.30px;width:7.30px;height:7.30px;box-sizing:border-box;border-top:1px solid #8a8a8a;border-left:1px solid #8a8a8a;border-right:1px solid #e4e4e4;border-bottom:1px solid #e4e4e4;box-shadow:inset 1px 1px 0 #b8b8b8;background:#fff;"></div>
<div style="position:absolute;left:610.77px;top:282.95px;font-size:8.8px;line-height:8.8px;color:#111;white-space:pre;transform:scaleX(0.7850);transform-origin:100% 0;">QtyReturnValue</div>
<div style="position:absolute;left:673.20px;top:280.50px;width:37.80px;height:12.20px;background:#f0f0f0;box-sizing:border-box;border-top:1px solid #a0a0a0;border-left:1px solid #a0a0a0;border-right:1px solid #fff;border-bottom:1px solid #fff;box-shadow:inset 1px 1px 0 #c4c4c4;"></div>
<div style="position:absolute;left:677.50px;top:282.95px;font-size:8.8px;line-height:8.8px;color:#111;white-space:pre;transform:scaleX(0.8000);transform-origin:0 0;">4.5 mA</div>
<div style="position:absolute;left:616.14px;top:297.65px;font-size:8.8px;line-height:8.8px;color:#111;white-space:pre;transform:scaleX(0.7850);transform-origin:100% 0;">QtyInjectValue</div>
<div style="position:absolute;left:673.20px;top:295.20px;width:37.80px;height:12.20px;background:#f0f0f0;box-sizing:border-box;border-top:1px solid #a0a0a0;border-left:1px solid #a0a0a0;border-right:1px solid #fff;border-bottom:1px solid #fff;box-shadow:inset 1px 1px 0 #c4c4c4;"></div>
<div style="position:absolute;left:677.50px;top:297.65px;font-size:8.8px;line-height:8.8px;color:#111;white-space:pre;transform:scaleX(0.8000);transform-origin:0 0;">10.8 mA</div>
<div style="position:absolute;left:713.75px;top:282.95px;font-size:8.8px;line-height:8.8px;color:#111;white-space:pre;transform:scaleX(0.7850);transform-origin:100% 0;">BeginDeadTime</div>
<div style="position:absolute;left:777.00px;top:280.50px;width:37.40px;height:12.20px;background:#f0f0f0;box-sizing:border-box;border-top:1px solid #a0a0a0;border-left:1px solid #a0a0a0;border-right:1px solid #fff;border-bottom:1px solid #fff;box-shadow:inset 1px 1px 0 #c4c4c4;"></div>
<div style="position:absolute;left:781.30px;top:282.95px;font-size:8.8px;line-height:8.8px;color:#111;white-space:pre;transform:scaleX(0.8000);transform-origin:0 0;">17.5 ms</div>
<div style="position:absolute;left:745.54px;top:297.65px;font-size:8.8px;line-height:8.8px;color:#111;white-space:pre;transform:scaleX(0.7850);transform-origin:100% 0;">Inj.Time</div>
<div style="position:absolute;left:777.00px;top:295.20px;width:37.40px;height:12.20px;background:#f0f0f0;box-sizing:border-box;border-top:1px solid #a0a0a0;border-left:1px solid #a0a0a0;border-right:1px solid #fff;border-bottom:1px solid #fff;box-shadow:inset 1px 1px 0 #c4c4c4;"></div>
<div style="position:absolute;left:781.30px;top:297.65px;font-size:8.8px;line-height:8.8px;color:#111;white-space:pre;transform:scaleX(0.8000);transform-origin:0 0;">31.4 ms</div>
<div style="position:absolute;left:828.37px;top:282.95px;font-size:8.8px;line-height:8.8px;color:#111;white-space:pre;transform:scaleX(0.7850);transform-origin:100% 0;">Fuel Cmd</div>
<div style="position:absolute;left:867.00px;top:280.50px;width:37.00px;height:12.20px;background:#f0f0f0;box-sizing:border-box;border-top:1px solid #a0a0a0;border-left:1px solid #a0a0a0;border-right:1px solid #fff;border-bottom:1px solid #fff;box-shadow:inset 1px 1px 0 #c4c4c4;"></div>
<div style="position:absolute;left:871.30px;top:282.95px;font-size:8.8px;line-height:8.8px;color:#111;white-space:pre;transform:scaleX(0.8000);transform-origin:0 0;">38.6 %</div>
<div style="position:absolute;left:815.65px;top:297.65px;font-size:8.8px;line-height:8.8px;color:#111;white-space:pre;transform:scaleX(0.7850);transform-origin:100% 0;">Injection with</div>
<div style="position:absolute;left:867.00px;top:295.20px;width:37.00px;height:12.20px;background:#f0f0f0;box-sizing:border-box;border-top:1px solid #a0a0a0;border-left:1px solid #a0a0a0;border-right:1px solid #fff;border-bottom:1px solid #fff;box-shadow:inset 1px 1px 0 #c4c4c4;"></div>
<div style="position:absolute;left:871.30px;top:297.65px;font-size:8.8px;line-height:8.8px;color:#111;white-space:pre;transform:scaleX(0.8000);transform-origin:0 0;">all nozzles</div>
<div style="position:absolute;left:911.23px;top:282.95px;font-size:8.8px;line-height:8.8px;color:#111;white-space:pre;transform:scaleX(0.8141);transform-origin:100% 0;">Engine Speed</div>
<div style="position:absolute;left:970.00px;top:280.50px;width:37.70px;height:12.20px;background:#f0f0f0;box-sizing:border-box;border-top:1px solid #a0a0a0;border-left:1px solid #a0a0a0;border-right:1px solid #fff;border-bottom:1px solid #fff;box-shadow:inset 1px 1px 0 #c4c4c4;"></div>
<div style="position:absolute;left:974.30px;top:282.95px;font-size:8.8px;line-height:8.8px;color:#111;white-space:pre;transform:scaleX(0.8000);transform-origin:0 0;">73 RPM</div>
</body></html>
